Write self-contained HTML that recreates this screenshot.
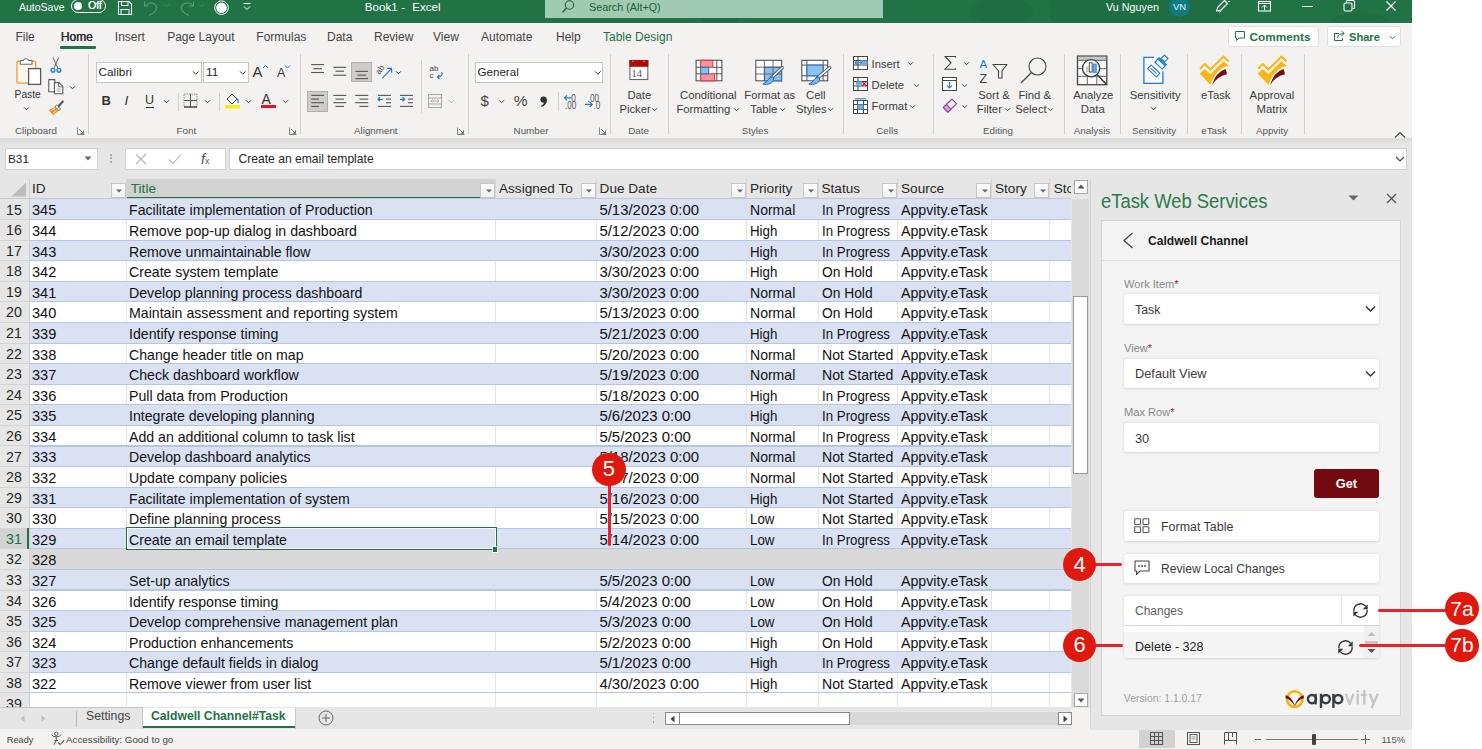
<!DOCTYPE html><html><head><meta charset="utf-8"><style>
html,body{margin:0;padding:0;}
body{width:1482px;height:749px;position:relative;overflow:hidden;background:#fff;font-family:"Liberation Sans",sans-serif;}
.t{position:absolute;white-space:nowrap;}
.r{position:absolute;box-sizing:border-box;}
</style></head><body>
<div class="r" style="left:0px;top:0px;width:1412px;height:749px;background:#f3f2f1;"></div>
<div class="r" style="left:0px;top:0px;width:1412px;height:22.6px;background:#217346;"></div>
<div class="r" style="left:0px;top:22.6px;width:1412px;height:1px;background:#fbfbfb;"></div>
<div class="r" style="left:0;top:0;width:1412px;height:22px;overflow:hidden;">
<div class="r" style="left:971px;top:-4px;width:62px;height:30px;border-radius:50%;background:rgba(0,0,0,0.05);"></div>
<div class="r" style="left:1049px;top:-6px;width:170px;height:34px;border-radius:18px 0 0 18px;background:rgba(0,0,0,0.05);"></div>
<div class="r" style="left:1330px;top:12px;width:60px;height:26px;border-radius:50%;background:rgba(0,0,0,0.05);"></div>
<div class="r" style="left:700px;top:2px;width:40px;height:26px;border-radius:50%;background:rgba(0,0,0,0.04);"></div>
</div>
<div class="t" style="left:19px;top:-3.50px;font-size:10.5px;line-height:20px;color:#fff;">AutoSave</div>
<div class="r" style="left:71px;top:-1px;width:35px;height:14px;border:1.2px solid #fff;border-radius:8px;"></div>
<div class="r" style="left:74.4px;top:2.3px;width:7.6px;height:7.6px;background:#fff;border-radius:50%;"></div>
<div class="t" style="left:88px;top:-3.70px;font-size:10.4px;line-height:20px;color:#fff;text-shadow:0.3px 0 0 #fff;">Off</div>
<svg class="r" style="left:117px;top:0px;" width="16" height="16" viewBox="0 0 16 16"><path d="M1.5 1.5 H12 L14.5 4 V14.5 H1.5 Z" fill="none" stroke="#fff" stroke-width="1.1"/><rect x="4.5" y="1.5" width="6.5" height="4" fill="none" stroke="#fff" stroke-width="1"/><rect x="4" y="9.5" width="8" height="5" fill="none" stroke="#fff" stroke-width="1"/></svg>
<svg class="r" style="left:143px;top:0px;" width="17" height="17" viewBox="0 0 17 17"><path d="M1.5 1.5 V6 H6" fill="none" stroke="#5a9a78" stroke-width="1.1"/><path d="M2 5.8 C4.5 2.5 9 2 12 4.5 C15 7 14.5 11.5 6 15.5" fill="none" stroke="#5a9a78" stroke-width="1.1"/></svg>
<svg class="r" style="left:163.0px;top:3.0px;" width="7.0" height="5.0" viewBox="0 0 7.0 5.0"><path d="M1 1.25 L3.5 3.75 L6.0 1.25" fill="none" stroke="#4f8f6c" stroke-width="1"/></svg>
<svg class="r" style="left:178px;top:0px;" width="17" height="17" viewBox="0 0 17 17"><path d="M15.5 1.5 V6 H11" fill="none" stroke="#5a9a78" stroke-width="1.1"/><path d="M15 5.8 C12.5 2.5 8 2 5 4.5 C2 7 2.5 11.5 11 15.5" fill="none" stroke="#5a9a78" stroke-width="1.1"/></svg>
<svg class="r" style="left:198.0px;top:3.0px;" width="7.0" height="5.0" viewBox="0 0 7.0 5.0"><path d="M1 1.25 L3.5 3.75 L6.0 1.25" fill="none" stroke="#4f8f6c" stroke-width="1"/></svg>
<svg class="r" style="left:213px;top:0px;" width="17" height="17" viewBox="0 0 17 17"><circle cx="8.5" cy="7.7" r="6.8" fill="none" stroke="#fff" stroke-width="1"/><circle cx="8.5" cy="7.7" r="5.3" fill="#fff"/></svg>
<svg class="r" style="left:242px;top:2px;" width="10" height="10" viewBox="0 0 10 10"><path d="M1.5 1.5 H8.5" stroke="#fff" stroke-width="1"/><path d="M2 4.5 L5 7.5 L8 4.5" fill="none" stroke="#fff" stroke-width="1"/></svg>
<div class="t" style="left:364.8px;top:-3.00px;font-size:11.6px;line-height:20px;color:#fff;">Book1</div>
<div class="t" style="left:401.3px;top:-3.00px;font-size:11.6px;line-height:20px;color:#fff;">-</div>
<div class="t" style="left:412.2px;top:-3.00px;font-size:11.6px;line-height:20px;color:#fff;">Excel</div>
<div class="r" style="left:544.5px;top:0px;width:338px;height:18px;background:#a0cbb2;"></div>
<svg class="r" style="left:561px;top:0px;" width="14" height="14" viewBox="0 0 14 14"><circle cx="8.5" cy="5" r="4.2" fill="none" stroke="#235c3b" stroke-width="1.1"/><path d="M5.5 8 L1.5 12.5" stroke="#235c3b" stroke-width="1.2"/></svg>
<div class="t" style="left:589px;top:-3.50px;font-size:10.8px;line-height:20px;color:#235c3b;">Search (Alt+Q)</div>
<div class="t" style="left:1106px;top:-3.00px;font-size:10.8px;line-height:20px;color:#fff;">Vu Nguyen</div>
<div class="r" style="left:1169px;top:-4px;width:21px;height:21px;border-radius:50%;background:#0f7b80;"></div>
<div class="t" style="left:979.5px;width:400px;text-align:center;top:-3.50px;font-size:9.5px;line-height:20px;color:#e8f4f4;">VN</div>
<svg class="r" style="left:1214px;top:-1px;" width="17" height="16" viewBox="0 0 17 16"><path d="M2.5 12 L4 8 L10.5 1.5 L13.5 4.5 L7 11 Z" fill="none" stroke="#fff" stroke-width="1.1" stroke-linejoin="round"/><path d="M4.5 12.5 C5.5 13.5 6.5 13 7 11.5" fill="none" stroke="#fff" stroke-width="1"/><path d="M13 0.5 L15.5 0 M14 2.5 L16 2.5" stroke="#fff" stroke-width="0.9"/></svg>
<svg class="r" style="left:1257px;top:-1px;" width="15" height="14" viewBox="0 0 15 14"><rect x="1.5" y="2.5" width="12" height="9.5" fill="none" stroke="#fff" stroke-width="1.1"/><path d="M1.5 4.5 H13.5" stroke="#fff" stroke-width="1"/><path d="M5 8.5 L7.5 6 L10 8.5 M7.5 6 V11" fill="none" stroke="#fff" stroke-width="1"/></svg>
<div class="r" style="left:1302px;top:5.6px;width:10.5px;height:1.1px;background:#fff;"></div>
<svg class="r" style="left:1343px;top:-1px;" width="13" height="14" viewBox="0 0 13 14"><rect x="1" y="4" width="8" height="8" fill="none" stroke="#fff" stroke-width="1.1" rx="1.5"/><path d="M3.5 3.5 V2.5 Q3.5 1.5 4.5 1.5 H10 Q11.5 1.5 11.5 3 V8.5 Q11.5 9.5 10.5 9.5 H9.5" fill="none" stroke="#fff" stroke-width="1.1"/></svg>
<svg class="r" style="left:1385px;top:0px;" width="12" height="12" viewBox="0 0 12 12"><path d="M1.5 1.5 L10.5 10.5 M10.5 1.5 L1.5 10.5" stroke="#fff" stroke-width="1.1"/></svg>
<div class="t" style="left:15.4px;top:26.50px;font-size:12px;line-height:20px;color:#444;">File</div>
<div class="t" style="left:60.7px;top:26.50px;font-size:12px;line-height:20px;color:#2b2b2b;text-shadow:0.35px 0 0 #2b2b2b;">Home</div>
<div class="t" style="left:114.8px;top:26.50px;font-size:12px;line-height:20px;color:#444;">Insert</div>
<div class="t" style="left:167.2px;top:26.50px;font-size:12px;line-height:20px;color:#444;">Page Layout</div>
<div class="t" style="left:256.3px;top:26.50px;font-size:12px;line-height:20px;color:#444;">Formulas</div>
<div class="t" style="left:327px;top:26.50px;font-size:12px;line-height:20px;color:#444;">Data</div>
<div class="t" style="left:374px;top:26.50px;font-size:12px;line-height:20px;color:#444;">Review</div>
<div class="t" style="left:433px;top:26.50px;font-size:12px;line-height:20px;color:#444;">View</div>
<div class="t" style="left:481px;top:26.50px;font-size:12px;line-height:20px;color:#444;">Automate</div>
<div class="t" style="left:556px;top:26.50px;font-size:12px;line-height:20px;color:#444;">Help</div>
<div class="t" style="left:603px;top:26.50px;font-size:12px;line-height:20px;color:#217346;">Table Design</div>
<div class="r" style="left:60px;top:46.3px;width:35.5px;height:2.6px;background:#217346;border-radius:1px;"></div>
<div class="r" style="left:1228px;top:25.8px;width:91px;height:21.5px;background:#fff;border:1px solid #e1dfdd;border-radius:3px;"></div>
<svg class="r" style="left:1234px;top:30px;" width="12" height="12" viewBox="0 0 12 12"><path d="M1.5 1.5 H10.5 V8 H5 L2.5 10.5 V8 H1.5 Z" fill="none" stroke="#217346" stroke-width="1"/></svg>
<div class="t" style="left:1249.6px;top:26.50px;font-size:11.8px;line-height:20px;color:#217346;font-weight:700;">Comments</div>
<div class="r" style="left:1327px;top:25.8px;width:74px;height:21.5px;background:#fff;border:1px solid #e1dfdd;border-radius:3px;"></div>
<svg class="r" style="left:1333px;top:30px;" width="13" height="12" viewBox="0 0 13 12"><path d="M6 3.5 H1.5 V10.5 H9.5 V8" fill="none" stroke="#217346" stroke-width="1"/><path d="M4.5 8 C5 5 7.5 3.5 11 3.5 M8.5 1 L11 3.5 L8.5 6" fill="none" stroke="#217346" stroke-width="1"/></svg>
<div class="t" style="left:1349px;top:26.50px;font-size:11.1px;line-height:20px;color:#217346;font-weight:700;">Share</div>
<svg class="r" style="left:1389.0px;top:34.5px;" width="7.0" height="5.0" viewBox="0 0 7.0 5.0"><path d="M1 1.25 L3.5 3.75 L6.0 1.25" fill="none" stroke="#217346" stroke-width="1"/></svg>
<div class="r" style="left:0px;top:137.6px;width:1412px;height:1px;background:#dcdcdc;"></div>
<div class="r" style="left:0;top:138.5px;width:1412px;height:4px;background:linear-gradient(#d8d8d8,#e6e6e6);"></div>
<div class="r" style="left:88px;top:54px;width:1px;height:80px;background:#d2d0ce;"></div>
<div class="r" style="left:300px;top:54px;width:1px;height:80px;background:#d2d0ce;"></div>
<div class="r" style="left:467.7px;top:54px;width:1px;height:80px;background:#d2d0ce;"></div>
<div class="r" style="left:610.3px;top:54px;width:1px;height:80px;background:#d2d0ce;"></div>
<div class="r" style="left:667.5px;top:54px;width:1px;height:80px;background:#d2d0ce;"></div>
<div class="r" style="left:843.4px;top:54px;width:1px;height:80px;background:#d2d0ce;"></div>
<div class="r" style="left:932.5px;top:54px;width:1px;height:80px;background:#d2d0ce;"></div>
<div class="r" style="left:1063.6px;top:54px;width:1px;height:80px;background:#d2d0ce;"></div>
<div class="r" style="left:1120.4px;top:54px;width:1px;height:80px;background:#d2d0ce;"></div>
<div class="r" style="left:1187.3px;top:54px;width:1px;height:80px;background:#d2d0ce;"></div>
<div class="r" style="left:1240.7px;top:54px;width:1px;height:80px;background:#d2d0ce;"></div>
<div class="r" style="left:1303.8px;top:54px;width:1px;height:80px;background:#d2d0ce;"></div>
<div class="t" style="left:-164px;width:400px;text-align:center;top:121.00px;font-size:9.8px;line-height:20px;color:#555;">Clipboard</div>
<div class="t" style="left:-13.599999999999994px;width:400px;text-align:center;top:121.00px;font-size:9.8px;line-height:20px;color:#555;">Font</div>
<div class="t" style="left:175.8px;width:400px;text-align:center;top:121.00px;font-size:9.8px;line-height:20px;color:#555;">Alignment</div>
<div class="t" style="left:331px;width:400px;text-align:center;top:121.00px;font-size:9.8px;line-height:20px;color:#555;">Number</div>
<div class="t" style="left:438.6px;width:400px;text-align:center;top:121.00px;font-size:9.8px;line-height:20px;color:#555;">Date</div>
<div class="t" style="left:555px;width:400px;text-align:center;top:121.00px;font-size:9.8px;line-height:20px;color:#555;">Styles</div>
<div class="t" style="left:687.2px;width:400px;text-align:center;top:121.00px;font-size:9.8px;line-height:20px;color:#555;">Cells</div>
<div class="t" style="left:798px;width:400px;text-align:center;top:121.00px;font-size:9.8px;line-height:20px;color:#555;">Editing</div>
<div class="t" style="left:892px;width:400px;text-align:center;top:121.00px;font-size:9.8px;line-height:20px;color:#555;">Analysis</div>
<div class="t" style="left:954px;width:400px;text-align:center;top:121.00px;font-size:9.8px;line-height:20px;color:#555;">Sensitivity</div>
<div class="t" style="left:1014px;width:400px;text-align:center;top:121.00px;font-size:9.8px;line-height:20px;color:#555;">eTask</div>
<div class="t" style="left:1072px;width:400px;text-align:center;top:121.00px;font-size:9.8px;line-height:20px;color:#555;">Appvity</div>
<svg class="r" style="left:77px;top:127px;" width="8" height="8" viewBox="0 0 8 8"><path d="M0.5 0.5 H7.5 V7.5" fill="none" stroke="#777" stroke-width="0.9" transform="rotate(180 4 4)"/><path d="M2 2 L6.5 6.5 M6.5 3.5 V6.5 H3.5" fill="none" stroke="#666" stroke-width="0.9"/></svg>
<svg class="r" style="left:289px;top:127px;" width="8" height="8" viewBox="0 0 8 8"><path d="M0.5 0.5 H7.5 V7.5" fill="none" stroke="#777" stroke-width="0.9" transform="rotate(180 4 4)"/><path d="M2 2 L6.5 6.5 M6.5 3.5 V6.5 H3.5" fill="none" stroke="#666" stroke-width="0.9"/></svg>
<svg class="r" style="left:456.5px;top:127px;" width="8" height="8" viewBox="0 0 8 8"><path d="M0.5 0.5 H7.5 V7.5" fill="none" stroke="#777" stroke-width="0.9" transform="rotate(180 4 4)"/><path d="M2 2 L6.5 6.5 M6.5 3.5 V6.5 H3.5" fill="none" stroke="#666" stroke-width="0.9"/></svg>
<svg class="r" style="left:599px;top:127px;" width="8" height="8" viewBox="0 0 8 8"><path d="M0.5 0.5 H7.5 V7.5" fill="none" stroke="#777" stroke-width="0.9" transform="rotate(180 4 4)"/><path d="M2 2 L6.5 6.5 M6.5 3.5 V6.5 H3.5" fill="none" stroke="#666" stroke-width="0.9"/></svg>
<svg class="r" style="left:8px;top:52px;" width="40" height="40" viewBox="0 0 40 40"><rect x="8.9" y="9.2" width="18.8" height="22" rx="1.2" fill="#fdf7ee" stroke="#ec9a33" stroke-width="1.3"/><path d="M12.3 12.2 V8.5 H15.5 A2.6 2.4 0 0 1 20.5 8.5 H24 V12.2 Z" fill="#fff" stroke="#6d6d6d" stroke-width="1.1" stroke-linejoin="round"/><rect x="20.6" y="16.6" width="12" height="15.8" fill="#fff" stroke="#5a5a5a" stroke-width="1.3"/></svg>
<div class="t" style="left:14.6px;top:84.70px;font-size:10.2px;line-height:20px;color:#333;">Paste</div>
<svg class="r" style="left:22.7px;top:105.9px;" width="7.0" height="5.0" viewBox="0 0 7.0 5.0"><path d="M1 1.25 L3.5 3.75 L6.0 1.25" fill="none" stroke="#444" stroke-width="1"/></svg>
<svg class="r" style="left:48px;top:55px;" width="14" height="18" viewBox="0 0 14 18"><path d="M5 2.5 L9.8 13 M10.8 2.5 L6 13" stroke="#555" stroke-width="0.9"/><circle cx="5" cy="15.2" r="1.9" fill="#cfe4f7" stroke="#1e7bd2" stroke-width="1.3"/><circle cx="10.9" cy="15.2" r="1.9" fill="#cfe4f7" stroke="#1e7bd2" stroke-width="1.3"/></svg>
<svg class="r" style="left:47px;top:78px;" width="18" height="18" viewBox="0 0 18 18"><path d="M1.8 1.6 H7.8 V13.8 H1.8 Z" fill="#fff" stroke="#5a5a5a" stroke-width="1.1" stroke-linejoin="round"/><path d="M7.4 4.6 H12 L15.8 8.4 V15.7 H7.4 Z" fill="#fff" stroke="#5a5a5a" stroke-width="1.1" stroke-linejoin="round"/><path d="M11.6 4.8 V8.8 H15.6" fill="none" stroke="#5a5a5a" stroke-width="0.9"/><path d="M9.6 11 H13.6 M9.6 13 H13.6" stroke="#8a8a8a" stroke-width="0.8"/></svg>
<svg class="r" style="left:69.2px;top:84.5px;" width="7.0" height="5.0" viewBox="0 0 7.0 5.0"><path d="M1 1.25 L3.5 3.75 L6.0 1.25" fill="none" stroke="#444" stroke-width="1"/></svg>
<svg class="r" style="left:47px;top:100px;" width="18" height="17" viewBox="0 0 18 17"><path d="M15.8 1.5 L11 6.8" stroke="#5a5a5a" stroke-width="2.2" stroke-linecap="round"/><path d="M9.6 5 L13.5 8.9 L11.8 10.6 L7.9 6.7 Z" fill="#fff" stroke="#5a5a5a" stroke-width="1"/><path d="M8.2 7 L11.6 10.4 L6.4 15 C4.5 13.5 3 12 1.9 10.1 Z" fill="#f08c1c"/><path d="M4.5 10.5 L8 8.5 M6 13 L9.2 10.8" stroke="#fff" stroke-width="0.9"/></svg>
<div class="r" style="left:95.5px;top:61.5px;width:106px;height:21px;background:#fff;border:1px solid #c8c6c4;"></div>
<div class="t" style="left:98.5px;top:62.00px;font-size:11.8px;line-height:20px;color:#262626;">Calibri</div>
<svg class="r" style="left:191.89999999999998px;top:69.7px;" width="7.6" height="5.6" viewBox="0 0 7.6 5.6"><path d="M1 1.4 L3.8 4.199999999999999 L6.6 1.4" fill="none" stroke="#333" stroke-width="1"/></svg>
<div class="r" style="left:203px;top:61.5px;width:45.5px;height:21px;background:#fff;border:1px solid #c8c6c4;"></div>
<div class="t" style="left:206px;top:62.00px;font-size:11.8px;line-height:20px;color:#262626;">11</div>
<svg class="r" style="left:238.5px;top:69.7px;" width="7.6" height="5.6" viewBox="0 0 7.6 5.6"><path d="M1 1.4 L3.8 4.199999999999999 L6.6 1.4" fill="none" stroke="#333" stroke-width="1"/></svg>
<div class="t" style="left:252.5px;top:61.50px;font-size:15px;line-height:20px;color:#333;">A</div>
<svg class="r" style="left:262px;top:64px;" width="7" height="5" viewBox="0 0 7 5"><path d="M1 4 L3.5 1.5 L6 4" fill="none" stroke="#1e7bd2" stroke-width="1"/></svg>
<div class="t" style="left:277px;top:62.50px;font-size:12.5px;line-height:20px;color:#333;">A</div>
<svg class="r" style="left:284px;top:64px;" width="7" height="5" viewBox="0 0 7 5"><path d="M1 1.5 L3.5 4 L6 1.5" fill="none" stroke="#1e7bd2" stroke-width="1"/></svg>
<div class="t" style="left:101.5px;top:90.50px;font-size:13px;line-height:20px;color:#333;font-weight:700;">B</div>
<div class="t" style="left:124.5px;top:90.50px;font-size:13.5px;line-height:20px;color:#333;font-style:italic;font-family:"Liberation Serif",serif;">I</div>
<div class="t" style="left:145px;top:89.50px;font-size:12.5px;line-height:20px;color:#333;">U</div>
<div class="r" style="left:145.5px;top:106.5px;width:8.5px;height:1px;background:#333;"></div>
<svg class="r" style="left:162.9px;top:98.5px;" width="7.0" height="5.0" viewBox="0 0 7.0 5.0"><path d="M1 1.25 L3.5 3.75 L6.0 1.25" fill="none" stroke="#444" stroke-width="1"/></svg>
<div class="r" style="left:177.5px;top:92.5px;width:1px;height:18px;background:#d2d0ce;"></div>
<svg class="r" style="left:183px;top:93px;" width="15" height="15" viewBox="0 0 15 15"><rect x="1" y="1" width="13" height="13" fill="none" stroke="#888" stroke-width="1" stroke-dasharray="1.5 1"/><path d="M7.5 1 V14 M1 7.5 H14" stroke="#555" stroke-width="1"/><path d="M1 14 H14" stroke="#333" stroke-width="1.2"/></svg>
<svg class="r" style="left:204.0px;top:98.5px;" width="7.0" height="5.0" viewBox="0 0 7.0 5.0"><path d="M1 1.25 L3.5 3.75 L6.0 1.25" fill="none" stroke="#444" stroke-width="1"/></svg>
<div class="r" style="left:218.6px;top:92.5px;width:1px;height:18px;background:#d2d0ce;"></div>
<svg class="r" style="left:224px;top:92px;" width="17" height="17" viewBox="0 0 17 17"><path d="M3 7 L8 2 L13 7 L8 12 Z" fill="none" stroke="#444" stroke-width="1"/><path d="M12 6 Q15 8 14 11" fill="none" stroke="#1e7bd2" stroke-width="1.2"/><rect x="1" y="13.2" width="15" height="3.3" fill="#ffea00"/></svg>
<svg class="r" style="left:245.1px;top:98.5px;" width="7.0" height="5.0" viewBox="0 0 7.0 5.0"><path d="M1 1.25 L3.5 3.75 L6.0 1.25" fill="none" stroke="#444" stroke-width="1"/></svg>
<div class="t" style="left:261.5px;top:88.50px;font-size:14px;line-height:20px;color:#333;">A</div>
<div class="r" style="left:261px;top:105px;width:15px;height:3.3px;background:#e81123;"></div>
<svg class="r" style="left:281.5px;top:98.5px;" width="7.0" height="5.0" viewBox="0 0 7.0 5.0"><path d="M1 1.25 L3.5 3.75 L6.0 1.25" fill="none" stroke="#444" stroke-width="1"/></svg>
<div class="r" style="left:351.4px;top:61.6px;width:20.2px;height:20.9px;background:#cfcdcb;border:1px solid #b3b0ad;"></div>
<div class="r" style="left:307.4px;top:91.1px;width:20.3px;height:21.1px;background:#cfcdcb;border:1px solid #b3b0ad;"></div>
<svg class="r" style="left:300px;top:56px;" width="160" height="60" viewBox="0 0 160 60"><rect x="11.20" y="8.05" width="12.90" height="1.1" fill="#555"/><rect x="13.50" y="12.15" width="8.50" height="1.1" fill="#555"/><rect x="11.20" y="15.95" width="12.90" height="1.1" fill="#555"/><rect x="33.30" y="10.75" width="13.00" height="1.1" fill="#555"/><rect x="35.50" y="14.65" width="8.50" height="1.1" fill="#555"/><rect x="33.30" y="18.65" width="13.00" height="1.1" fill="#555"/><rect x="55.50" y="14.85" width="12.50" height="1.1" fill="#555"/><rect x="57.50" y="18.65" width="8.50" height="1.1" fill="#555"/><rect x="55.50" y="22.05" width="12.50" height="1.1" fill="#555"/><rect x="11.20" y="38.85" width="12.80" height="1.1" fill="#555"/><rect x="11.20" y="42.55" width="7.80" height="1.1" fill="#555"/><rect x="11.20" y="46.15" width="12.80" height="1.1" fill="#555"/><rect x="11.20" y="49.85" width="7.80" height="1.1" fill="#555"/><rect x="33.30" y="38.85" width="13.00" height="1.1" fill="#555"/><rect x="35.50" y="42.55" width="8.50" height="1.1" fill="#555"/><rect x="33.30" y="46.15" width="13.00" height="1.1" fill="#555"/><rect x="35.50" y="49.85" width="8.50" height="1.1" fill="#555"/><rect x="55.20" y="38.85" width="13.00" height="1.1" fill="#555"/><rect x="59.50" y="42.55" width="8.70" height="1.1" fill="#555"/><rect x="55.20" y="46.15" width="13.00" height="1.1" fill="#555"/><rect x="59.50" y="49.85" width="8.70" height="1.1" fill="#555"/><rect x="78.00" y="38.85" width="13.00" height="1.1" fill="#555"/><rect x="86.00" y="42.55" width="5.00" height="1.1" fill="#555"/><rect x="86.00" y="46.15" width="5.00" height="1.1" fill="#555"/><rect x="78.00" y="49.85" width="13.00" height="1.1" fill="#555"/><rect x="100.00" y="38.85" width="13.00" height="1.1" fill="#555"/><rect x="108.00" y="42.55" width="5.00" height="1.1" fill="#555"/><rect x="108.00" y="46.15" width="5.00" height="1.1" fill="#555"/><rect x="100.00" y="49.85" width="13.00" height="1.1" fill="#555"/></svg>
<svg class="r" style="left:376px;top:62px;" width="18" height="18" viewBox="0 0 18 18"><text x="0" y="0" font-size="8.5" font-family="Liberation Sans" fill="#444" transform="translate(3.5 13) rotate(-55)">ab</text><path d="M6.4 16.1 L15.6 6.4 M11.2 6.4 H15.6 V10.8" fill="none" stroke="#1e7bd2" stroke-width="1.1"/></svg>
<svg class="r" style="left:376px;top:93px;" width="16" height="12" viewBox="0 0 16 12"><path d="M6.5 6.3 H2 M4 4.3 L2 6.3 L4 8.3" fill="none" stroke="#1e7bd2" stroke-width="1.3"/></svg>
<svg class="r" style="left:398px;top:93px;" width="16" height="12" viewBox="0 0 16 12"><path d="M2 6.3 H6.5 M4.5 4.3 L6.5 6.3 L4.5 8.3" fill="none" stroke="#1e7bd2" stroke-width="1.3"/></svg>
<svg class="r" style="left:395.3px;top:69.5px;" width="7.0" height="5.0" viewBox="0 0 7.0 5.0"><path d="M1 1.25 L3.5 3.75 L6.0 1.25" fill="none" stroke="#444" stroke-width="1"/></svg>
<div class="r" style="left:421px;top:59.6px;width:1px;height:53px;background:#d2d0ce;"></div>
<svg class="r" style="left:428px;top:64px;" width="17" height="16" viewBox="0 0 17 16"><text x="1.5" y="7.2" font-size="8" font-family="Liberation Sans" fill="#444">ab</text><text x="1.5" y="14.2" font-size="8" font-family="Liberation Sans" fill="#444">c</text><path d="M13.5 8 C15 10 14 13 10 13 M11.5 10.8 L9.5 13 L11.5 15.2" fill="none" stroke="#1e7bd2" stroke-width="1.2"/></svg>
<svg class="r" style="left:428px;top:94px;" width="15" height="14" viewBox="0 0 15 14"><rect x="0.5" y="0.5" width="13" height="13" fill="none" stroke="#a8a8a8" stroke-width="1"/><path d="M0.5 4 H13.5 M0.5 10 H13.5" stroke="#a8a8a8" stroke-width="1"/><path d="M3 7 H11 M4.5 5.5 L3 7 L4.5 8.5 M9.5 5.5 L11 7 L9.5 8.5" fill="none" stroke="#a8a8a8" stroke-width="0.9"/></svg>
<svg class="r" style="left:448.1px;top:98.5px;" width="7.0" height="5.0" viewBox="0 0 7.0 5.0"><path d="M1 1.25 L3.5 3.75 L6.0 1.25" fill="none" stroke="#b0b0b0" stroke-width="1"/></svg>
<div class="r" style="left:475px;top:61.5px;width:128px;height:21px;background:#fff;border:1px solid #c8c6c4;"></div>
<div class="t" style="left:477.5px;top:62.00px;font-size:11.6px;line-height:20px;color:#262626;">General</div>
<svg class="r" style="left:593.5px;top:69.7px;" width="7.6" height="5.6" viewBox="0 0 7.6 5.6"><path d="M1 1.4 L3.8 4.199999999999999 L6.6 1.4" fill="none" stroke="#333" stroke-width="1"/></svg>
<div class="t" style="left:480.5px;top:91.30px;font-size:15px;line-height:20px;color:#444;">$</div>
<svg class="r" style="left:497.9px;top:98.5px;" width="7.0" height="5.0" viewBox="0 0 7.0 5.0"><path d="M1 1.25 L3.5 3.75 L6.0 1.25" fill="none" stroke="#444" stroke-width="1"/></svg>
<div class="t" style="left:513.8px;top:91.30px;font-size:15.5px;line-height:20px;color:#444;">%</div>
<svg class="r" style="left:538px;top:94px;" width="12" height="15" viewBox="0 0 12 15"><circle cx="5.6" cy="5.6" r="3.2" fill="#333"/><path d="M8.6 5 C9.3 9.5 6.8 12 3.2 13 L2.9 12 C5.3 10.8 6.3 9 6.2 7.2 Z" fill="#333"/></svg>
<div class="r" style="left:557.6px;top:92.4px;width:1px;height:18.4px;background:#d2d0ce;"></div>
<svg class="r" style="left:562px;top:92px;" width="18" height="18" viewBox="0 0 18 18"><g transform="scale(0.82 1)" font-family="Liberation Sans" font-size="10" fill="#555"><text x="11.4" y="10.5">0</text><text x="3.6" y="17.5">.00</text></g><path d="M9.5 5.8 H2.5 M5 3.3 L2.5 5.8 L5 8.3" fill="none" stroke="#1e7bd2" stroke-width="1.2"/></svg>
<svg class="r" style="left:584px;top:92px;" width="18" height="18" viewBox="0 0 18 18"><g transform="scale(0.82 1)" font-family="Liberation Sans" font-size="10" fill="#555"><text x="4.5" y="10.5">.00</text><text x="11.5" y="17.5">.0</text></g><path d="M1 12.4 H8.2 M5.7 9.9 L8.2 12.4 L5.7 14.9" fill="none" stroke="#1e7bd2" stroke-width="1.2"/></svg>
<svg class="r" style="left:620px;top:54px;" width="40" height="32" viewBox="0 0 40 32"><rect x="9.9" y="6.5" width="17.9" height="19" fill="#fff" stroke="#6a6a6a" stroke-width="1.1"/><rect x="9.4" y="6" width="18.9" height="6.8" fill="#b00b0b"/><path d="M12 7.3 H14 M23 7.3 H25" stroke="#e8b0b0" stroke-width="0.7"/><text x="11.6" y="23.2" font-size="10.5" font-family="Liberation Serif" fill="#555">14</text></svg>
<div class="t" style="left:627.4px;top:84.50px;font-size:11.3px;line-height:20px;color:#3d3d3d;">Date</div>
<div class="t" style="left:619.4px;top:99.00px;font-size:11.3px;line-height:20px;color:#3d3d3d;">Picker</div>
<svg class="r" style="left:651.0px;top:106.5px;" width="7.0" height="5.0" viewBox="0 0 7.0 5.0"><path d="M1 1.25 L3.5 3.75 L6.0 1.25" fill="none" stroke="#444" stroke-width="1"/></svg>
<svg class="r" style="left:695px;top:59px;" width="30" height="24" viewBox="0 0 30 24"><rect x="1.1" y="1.3" width="25.8" height="20.5" fill="#fff" stroke="#555" stroke-width="1.1"/><rect x="5.6" y="1.3" width="12.2" height="7" fill="#f5929b" stroke="#e0343e" stroke-width="1"/><rect x="5.6" y="14.8" width="14" height="7" fill="#f5929b" stroke="#e0343e" stroke-width="1"/><rect x="5.6" y="8.3" width="8.1" height="6.5" fill="#8cc0ee" stroke="#1f6fc0" stroke-width="1"/><path d="M1.1 8.3 H5.6 M17.8 8.3 H26.9 M1.1 14.8 H5.6 M19.6 14.8 H26.9 M21.8 1.3 V21.8" stroke="#555" stroke-width="1"/></svg>
<div class="t" style="left:680.1px;top:84.50px;font-size:11.3px;line-height:20px;color:#3d3d3d;">Conditional</div>
<div class="t" style="left:676.4px;top:99.00px;font-size:11.3px;line-height:20px;color:#3d3d3d;">Formatting</div>
<svg class="r" style="left:733.0px;top:106.5px;" width="7.0" height="5.0" viewBox="0 0 7.0 5.0"><path d="M1 1.25 L3.5 3.75 L6.0 1.25" fill="none" stroke="#444" stroke-width="1"/></svg>
<svg class="r" style="left:754px;top:59px;" width="32" height="28" viewBox="0 0 32 28"><rect x="1.8" y="1.3" width="25.8" height="20.5" fill="#fff" stroke="#555" stroke-width="1.1"/><rect x="10.4" y="8.2" width="17.2" height="13.6" fill="#8cc0ee" stroke="#1f6fc0" stroke-width="1"/><path d="M1.8 8.2 H27.6 M1.8 15 H27.6 M10.4 1.3 V21.8 M19 1.3 V21.8" stroke="#555" stroke-width="1" opacity="0.85"/><path d="M28.1 8.7 L17 19.3" stroke="#555" stroke-width="3.4" stroke-linecap="round"/><path d="M28.1 8.7 L17 19.3" stroke="#fff" stroke-width="1.5" stroke-linecap="round"/><path d="M19 17.8 C14 18.3 14 23.3 8.8 25.1 C13.8 26.1 19.5 24.3 19.5 20.1 Z" fill="#7db6ea" stroke="#1f6fc0" stroke-width="1"/></svg>
<div class="t" style="left:744.3px;top:84.50px;font-size:11.3px;line-height:20px;color:#3d3d3d;">Format as</div>
<div class="t" style="left:750.3px;top:99.00px;font-size:11.3px;line-height:20px;color:#3d3d3d;">Table</div>
<svg class="r" style="left:778.6px;top:106.5px;" width="7.0" height="5.0" viewBox="0 0 7.0 5.0"><path d="M1 1.25 L3.5 3.75 L6.0 1.25" fill="none" stroke="#444" stroke-width="1"/></svg>
<svg class="r" style="left:801px;top:59px;" width="32" height="28" viewBox="0 0 32 28"><rect x="0.8" y="1.3" width="25.9" height="20.5" fill="#fff" stroke="#555" stroke-width="1.1"/><path d="M0.8 6.1 H26.7 M0.8 16.8 H26.7 M5.9 1.3 V21.8 M22.1 1.3 V21.8" stroke="#555" stroke-width="1"/><rect x="5.9" y="6.1" width="16.2" height="10.7" fill="#8cc0ee" stroke="#1f6fc0" stroke-width="1"/><path d="M28.7 8.7 L16 19.3" stroke="#555" stroke-width="3.4" stroke-linecap="round"/><path d="M28.7 8.7 L16 19.3" stroke="#fff" stroke-width="1.5" stroke-linecap="round"/><path d="M18 17.8 C13 18.3 13 23.3 7.8 25.1 C12.8 26.1 18.5 24.3 18.5 20.1 Z" fill="#7db6ea" stroke="#1f6fc0" stroke-width="1"/></svg>
<div class="t" style="left:806px;top:84.50px;font-size:11.3px;line-height:20px;color:#3d3d3d;">Cell</div>
<div class="t" style="left:796px;top:99.00px;font-size:11.3px;line-height:20px;color:#3d3d3d;">Styles</div>
<svg class="r" style="left:826.5px;top:106.5px;" width="7.0" height="5.0" viewBox="0 0 7.0 5.0"><path d="M1 1.25 L3.5 3.75 L6.0 1.25" fill="none" stroke="#444" stroke-width="1"/></svg>
<svg class="r" style="left:853px;top:56px;" width="16" height="15" viewBox="0 0 16 15"><rect x="0.5" y="0.5" width="14" height="13" fill="#fff" stroke="#444" stroke-width="1"/><path d="M0.5 4.5 H14.5 M0.5 9 H14.5 M5 0.5 V13.5" stroke="#444" stroke-width="1"/><rect x="7" y="4.5" width="7.5" height="4.5" fill="#6aaeea"/><path d="M9 6.7 H2 M4 4.7 L2 6.7 L4 8.7" fill="none" stroke="#1e7bd2" stroke-width="1.1"/></svg>
<div class="t" style="left:871.5px;top:54.00px;font-size:11.3px;line-height:20px;color:#3d3d3d;">Insert</div>
<svg class="r" style="left:907.1px;top:61.0px;" width="7.0" height="5.0" viewBox="0 0 7.0 5.0"><path d="M1 1.25 L3.5 3.75 L6.0 1.25" fill="none" stroke="#444" stroke-width="1"/></svg>
<svg class="r" style="left:853px;top:77px;" width="16" height="15" viewBox="0 0 16 15"><rect x="0.5" y="0.5" width="14" height="13" fill="#fff" stroke="#444" stroke-width="1"/><path d="M0.5 4.5 H14.5 M0.5 9 H14.5 M5 0.5 V13.5" stroke="#444" stroke-width="1"/><rect x="3" y="4.5" width="6" height="4.5" fill="#6aaeea"/><path d="M9 4.5 L13.5 9 M13.5 4.5 L9 9" stroke="#e81123" stroke-width="1.1"/></svg>
<div class="t" style="left:871.5px;top:75.00px;font-size:11.3px;line-height:20px;color:#3d3d3d;">Delete</div>
<svg class="r" style="left:913.3px;top:82.5px;" width="7.0" height="5.0" viewBox="0 0 7.0 5.0"><path d="M1 1.25 L3.5 3.75 L6.0 1.25" fill="none" stroke="#444" stroke-width="1"/></svg>
<svg class="r" style="left:853px;top:98px;" width="16" height="16" viewBox="0 0 16 16"><rect x="0.5" y="2.5" width="14" height="13" fill="#fff" stroke="#444" stroke-width="1"/><path d="M0.5 6.5 H14.5 M0.5 11.5 H14.5 M4.5 2.5 V15.5 M10.5 2.5 V15.5" stroke="#444" stroke-width="1"/><rect x="4.5" y="6.5" width="6" height="5" fill="#6aaeea"/><path d="M2 0.8 H13" stroke="#1e7bd2" stroke-width="1"/></svg>
<div class="t" style="left:871.5px;top:96.30px;font-size:11.3px;line-height:20px;color:#3d3d3d;">Format</div>
<svg class="r" style="left:908.9px;top:103.8px;" width="7.0" height="5.0" viewBox="0 0 7.0 5.0"><path d="M1 1.25 L3.5 3.75 L6.0 1.25" fill="none" stroke="#444" stroke-width="1"/></svg>
<svg class="r" style="left:943px;top:55px;" width="15" height="16" viewBox="0 0 15 16"><path d="M12.5 2.5 V1.5 H2 L8 7.8 L2 14.2 H12.5 V13.2" fill="none" stroke="#444" stroke-width="1.1" stroke-linejoin="miter"/></svg>
<svg class="r" style="left:962.8px;top:61.0px;" width="7.0" height="5.0" viewBox="0 0 7.0 5.0"><path d="M1 1.25 L3.5 3.75 L6.0 1.25" fill="none" stroke="#444" stroke-width="1"/></svg>
<svg class="r" style="left:942px;top:77px;" width="16" height="15" viewBox="0 0 16 15"><rect x="0.5" y="0.5" width="14" height="13" fill="#fff" stroke="#444" stroke-width="1"/><path d="M0.5 3.5 H14.5" stroke="#444" stroke-width="1"/><path d="M7.5 5 V11 M5 8.5 L7.5 11 L10 8.5" fill="none" stroke="#1e7bd2" stroke-width="1.1"/></svg>
<svg class="r" style="left:961.0px;top:82.5px;" width="7.0" height="5.0" viewBox="0 0 7.0 5.0"><path d="M1 1.25 L3.5 3.75 L6.0 1.25" fill="none" stroke="#444" stroke-width="1"/></svg>
<svg class="r" style="left:938px;top:94px;" width="24" height="24" viewBox="0 0 24 24"><path d="M8.7 10.7 L12.8 15.1 L9.9 18.3 L5.3 13.5 Z" fill="#dfa3e8"/><path d="M13.9 5.1 L18.6 9.6 L9.9 18.3 L5.3 13.5 Z" fill="none" stroke="#9b3fb5" stroke-width="1.3" stroke-linejoin="round"/><path d="M8.7 10.7 L12.8 15.1" stroke="#9b3fb5" stroke-width="1.2"/></svg>
<svg class="r" style="left:961.0px;top:103.8px;" width="7.0" height="5.0" viewBox="0 0 7.0 5.0"><path d="M1 1.25 L3.5 3.75 L6.0 1.25" fill="none" stroke="#444" stroke-width="1"/></svg>
<svg class="r" style="left:979px;top:56px;" width="30" height="28" viewBox="0 0 30 28"><text x="0.5" y="12" font-size="11.5" font-family="Liberation Sans" fill="#1e7bd2">A</text><text x="0.5" y="26.5" font-size="12.5" font-family="Liberation Sans" fill="#444">Z</text><path d="M14 8.5 H28 L23 15 V22 L19.5 22 V15 Z" fill="none" stroke="#444" stroke-width="1.1" stroke-linejoin="round"/></svg>
<div class="t" style="left:978.3px;top:84.50px;font-size:11.3px;line-height:20px;color:#3d3d3d;">Sort &amp;</div>
<div class="t" style="left:976.8px;top:99.00px;font-size:11.3px;line-height:20px;color:#3d3d3d;">Filter</div>
<svg class="r" style="left:1003.8px;top:106.5px;" width="7.0" height="5.0" viewBox="0 0 7.0 5.0"><path d="M1 1.25 L3.5 3.75 L6.0 1.25" fill="none" stroke="#444" stroke-width="1"/></svg>
<svg class="r" style="left:1019px;top:56px;" width="30" height="30" viewBox="0 0 30 30"><circle cx="18.5" cy="10.5" r="8.5" fill="none" stroke="#444" stroke-width="1.1"/><path d="M12.5 16.5 L2 27" stroke="#444" stroke-width="1.2"/></svg>
<div class="t" style="left:1018.4px;top:84.50px;font-size:11.3px;line-height:20px;color:#3d3d3d;">Find &amp;</div>
<div class="t" style="left:1015.3px;top:99.00px;font-size:11.3px;line-height:20px;color:#3d3d3d;">Select</div>
<svg class="r" style="left:1046.8px;top:106.5px;" width="7.0" height="5.0" viewBox="0 0 7.0 5.0"><path d="M1 1.25 L3.5 3.75 L6.0 1.25" fill="none" stroke="#444" stroke-width="1"/></svg>
<svg class="r" style="left:1070px;top:50px;" width="40" height="40" viewBox="0 0 40 40"><rect x="7.5" y="6.1" width="29.3" height="28.6" fill="#fafafa" stroke="#444" stroke-width="1.3"/><rect x="8.2" y="6.8" width="27.9" height="3.5" fill="#c8c8c8"/><path d="M7.5 10.3 H36.8 M7.5 18.7 H36.8 M7.5 26.3 H36.8 M17.3 26.3 V34.7 M26.8 26.3 V34.7" stroke="#666" stroke-width="1"/><circle cx="21.1" cy="18.2" r="8.6" fill="#fafafa" stroke="#3a3a3a" stroke-width="1.3"/><rect x="16" y="16.5" width="2.5" height="5.5" fill="#c8c8c8"/><rect x="19.3" y="12.7" width="2.8" height="9.3" fill="#fff" stroke="#444" stroke-width="0.9"/><rect x="23" y="14" width="3.2" height="8.3" fill="#6aaeea" stroke="#1e7bd2" stroke-width="0.8"/><path d="M27.3 24.8 L36.5 34.4" stroke="#3a3a3a" stroke-width="1.5"/></svg>
<div class="t" style="left:1073.2px;top:84.50px;font-size:11.3px;line-height:20px;color:#3d3d3d;">Analyze</div>
<div class="t" style="left:1080.8px;top:99.00px;font-size:11.3px;line-height:20px;color:#3d3d3d;">Data</div>
<svg class="r" style="left:1136px;top:52px;" width="40" height="36" viewBox="0 0 40 36"><path d="M18.2 5.3 H7.9 V31.3 H26.9 V19.3" fill="#fafafa" stroke="#1e7bd2" stroke-width="1.3"/><g transform="translate(17.7 19) rotate(43)"><rect x="-6" y="-2.5" width="12" height="5" fill="#fff" stroke="#1e7bd2" stroke-width="1.1"/><path d="M-4 0 H4" stroke="#1e7bd2" stroke-width="1"/></g><g transform="translate(24.6 11.4) rotate(43)"><rect x="-5" y="-3" width="10" height="6" fill="#fff" stroke="#1e7bd2" stroke-width="1.2"/><path d="M-5 -1.6 H5" stroke="#1e7bd2" stroke-width="1.6"/></g><g transform="translate(28.6 6.4) rotate(43)"><rect x="-2.4" y="-2.3" width="4.8" height="4.6" fill="#fff" stroke="#1e7bd2" stroke-width="1.1"/></g></svg>
<div class="t" style="left:1129.8px;top:84.50px;font-size:11.3px;line-height:20px;color:#3d3d3d;">Sensitivity</div>
<svg class="r" style="left:1149.5px;top:105.8px;" width="7.0" height="5.0" viewBox="0 0 7.0 5.0"><path d="M1 1.25 L3.5 3.75 L6.0 1.25" fill="none" stroke="#444" stroke-width="1"/></svg>
<svg class="r" style="left:1192px;top:50px;" width="44" height="40" viewBox="0 0 44 40"><path d="M8 18.7 L12.8 14.1 L18.4 19.6 L31.5 6.6 L36.6 11.2" fill="none" stroke="#f8b514" stroke-width="2.1" stroke-linejoin="miter"/><path d="M7.7 23.5 L12.8 19 L18.4 24.2 L31.5 11.2 L36.8 16 Q25 17 18.4 34.7 Z" fill="#f8b514"/><path d="M20 35 Q24 22 33.6 19 L35 24.3 Q26 26 20 35 Z" fill="#760d12"/></svg>
<div class="t" style="left:1201px;top:84.50px;font-size:11.3px;line-height:20px;color:#3d3d3d;">eTask</div>
<svg class="r" style="left:1249.5px;top:50px;" width="44" height="40" viewBox="0 0 44 40"><path d="M8 18.7 L12.8 14.1 L18.4 19.6 L31.5 6.6 L36.6 11.2" fill="none" stroke="#f8b514" stroke-width="2.1" stroke-linejoin="miter"/><path d="M7.7 23.5 L12.8 19 L18.4 24.2 L31.5 11.2 L36.8 16 Q25 17 18.4 34.7 Z" fill="#f8b514"/><path d="M20 35 Q24 22 33.6 19 L35 24.3 Q26 26 20 35 Z" fill="#760d12"/></svg>
<div class="t" style="left:1249.6px;top:84.50px;font-size:11.3px;line-height:20px;color:#3d3d3d;">Approval</div>
<div class="t" style="left:1256.6px;top:99.00px;font-size:11.3px;line-height:20px;color:#3d3d3d;">Matrix</div>
<svg class="r" style="left:1394px;top:131px;" width="12" height="8" viewBox="0 0 12 8"><path d="M1 6.5 L6 1.5 L11 6.5" fill="none" stroke="#444" stroke-width="1.1"/></svg>
<div class="r" style="left:0px;top:142.5px;width:1412px;height:57px;background:#e6e6e6;"></div>
<div class="r" style="left:4.5px;top:148px;width:93px;height:22px;background:#fff;border:1px solid #d1d1d1;"></div>
<div class="t" style="left:8px;top:149.00px;font-size:11.8px;line-height:20px;color:#262626;">B31</div>
<svg class="r" style="left:84px;top:156px;" width="8" height="5" viewBox="0 0 8 5"><path d="M0.5 0.5 H7.5 L4 4.5 Z" fill="#666"/></svg>
<div class="r" style="left:110.3px;top:153.7px;width:2px;height:2px;background:#9a9a9a;border-radius:50%;"></div>
<div class="r" style="left:110.3px;top:157.4px;width:2px;height:2px;background:#9a9a9a;border-radius:50%;"></div>
<div class="r" style="left:110.3px;top:161.1px;width:2px;height:2px;background:#9a9a9a;border-radius:50%;"></div>
<div class="r" style="left:125px;top:148px;width:100.5px;height:22px;background:#fff;border:1px solid #d1d1d1;"></div>
<svg class="r" style="left:135px;top:153px;" width="12" height="12" viewBox="0 0 12 12"><path d="M1 1 L11 11 M11 1 L1 11" stroke="#b5b5b5" stroke-width="1.1"/></svg>
<svg class="r" style="left:168px;top:153px;" width="14" height="12" viewBox="0 0 14 12"><path d="M1 6.5 L5 10.5 L13 1.5" fill="none" stroke="#b5b5b5" stroke-width="1.1"/></svg>
<div class="t" style="left:201px;top:148.50px;font-size:14px;line-height:20px;color:#555;font-family:"Liberation Serif",serif;"><i>f</i><span style="font-size:9px">x</span></div>
<div class="r" style="left:228.7px;top:148px;width:1178.5px;height:22px;background:#fff;border:1px solid #d1d1d1;"></div>
<div class="t" style="left:238.5px;top:149.00px;font-size:12.1px;line-height:20px;color:#262626;">Create an email template</div>
<svg class="r" style="left:1394.5px;top:155.5px;" width="10" height="6" viewBox="0 0 10 6"><path d="M1 1 L5 5 L9 1" fill="none" stroke="#444" stroke-width="1.2"/></svg>
<div class="r" style="left:0px;top:179px;width:1071px;height:20.0px;background:#e6e6e6;"></div>
<div class="r" style="left:126.2px;top:178.8px;width:369.4px;height:19.9px;background:#d2d2d2;"></div>
<div class="r" style="left:126.2px;top:197.2px;width:369.4px;height:1.6px;background:#217346;"></div>
<svg class="r" style="left:11px;top:182px;" width="16" height="15" viewBox="0 0 16 15"><path d="M15 0.5 V14.5 H0.5 Z" fill="#bdbdbd"/></svg>
<div class="r" style="left:28.6px;top:178.8px;width:1px;height:20px;background:#d0d0d0;"></div>
<div class="t" style="left:32px;top:178.50px;font-size:13.6px;line-height:20px;color:#262626;">ID</div>
<div class="t" style="left:130.8px;top:178.50px;font-size:13.6px;line-height:20px;color:#217346;">Title</div>
<div class="t" style="left:499px;top:178.50px;font-size:13.6px;line-height:20px;color:#262626;">Assigned To</div>
<div class="t" style="left:599.6px;top:178.50px;font-size:13.6px;line-height:20px;color:#262626;">Due Date</div>
<div class="t" style="left:750px;top:178.50px;font-size:13.6px;line-height:20px;color:#262626;">Priority</div>
<div class="t" style="left:821.5px;top:178.50px;font-size:13.6px;line-height:20px;color:#262626;">Status</div>
<div class="t" style="left:901px;top:178.50px;font-size:13.6px;line-height:20px;color:#262626;">Source</div>
<div class="t" style="left:995px;top:178.50px;font-size:13.6px;line-height:20px;color:#262626;">Story</div>
<div class="t" style="left:1053.7px;top:178.50px;font-size:13.6px;line-height:20px;color:#262626;">Sto</div>
<div class="r" style="left:125.7px;top:179px;width:1px;height:19.5px;background:#d6d6d6;"></div>
<div class="r" style="left:495.1px;top:179px;width:1px;height:19.5px;background:#d6d6d6;"></div>
<div class="r" style="left:595.6px;top:179px;width:1px;height:19.5px;background:#d6d6d6;"></div>
<div class="r" style="left:746.0px;top:179px;width:1px;height:19.5px;background:#d6d6d6;"></div>
<div class="r" style="left:817.5px;top:179px;width:1px;height:19.5px;background:#d6d6d6;"></div>
<div class="r" style="left:897.1px;top:179px;width:1px;height:19.5px;background:#d6d6d6;"></div>
<div class="r" style="left:991.0px;top:179px;width:1px;height:19.5px;background:#d6d6d6;"></div>
<div class="r" style="left:1049.0px;top:179px;width:1px;height:19.5px;background:#d6d6d6;"></div>
<div class="r" style="left:111.0px;top:183.2px;width:15px;height:15px;background:linear-gradient(#fdfdfd,#f0f0f0);border:1px solid #c6c6c6;"></div>
<svg class="r" style="left:115.2px;top:188.5px;" width="8" height="5" viewBox="0 0 8 5"><path d="M1 0.5 H7 L4 3.5 Z" fill="#666"/></svg>
<div class="r" style="left:480.4px;top:183.2px;width:15px;height:15px;background:linear-gradient(#fdfdfd,#f0f0f0);border:1px solid #c6c6c6;"></div>
<svg class="r" style="left:484.6px;top:188.5px;" width="8" height="5" viewBox="0 0 8 5"><path d="M1 0.5 H7 L4 3.5 Z" fill="#666"/></svg>
<div class="r" style="left:580.9px;top:183.2px;width:15px;height:15px;background:linear-gradient(#fdfdfd,#f0f0f0);border:1px solid #c6c6c6;"></div>
<svg class="r" style="left:585.1px;top:188.5px;" width="8" height="5" viewBox="0 0 8 5"><path d="M1 0.5 H7 L4 3.5 Z" fill="#666"/></svg>
<div class="r" style="left:731.3px;top:183.2px;width:15px;height:15px;background:linear-gradient(#fdfdfd,#f0f0f0);border:1px solid #c6c6c6;"></div>
<svg class="r" style="left:735.5px;top:188.5px;" width="8" height="5" viewBox="0 0 8 5"><path d="M1 0.5 H7 L4 3.5 Z" fill="#666"/></svg>
<div class="r" style="left:802.8px;top:183.2px;width:15px;height:15px;background:linear-gradient(#fdfdfd,#f0f0f0);border:1px solid #c6c6c6;"></div>
<svg class="r" style="left:807px;top:188.5px;" width="8" height="5" viewBox="0 0 8 5"><path d="M1 0.5 H7 L4 3.5 Z" fill="#666"/></svg>
<div class="r" style="left:882.4px;top:183.2px;width:15px;height:15px;background:linear-gradient(#fdfdfd,#f0f0f0);border:1px solid #c6c6c6;"></div>
<svg class="r" style="left:886.6px;top:188.5px;" width="8" height="5" viewBox="0 0 8 5"><path d="M1 0.5 H7 L4 3.5 Z" fill="#666"/></svg>
<div class="r" style="left:976.3px;top:183.2px;width:15px;height:15px;background:linear-gradient(#fdfdfd,#f0f0f0);border:1px solid #c6c6c6;"></div>
<svg class="r" style="left:980.5px;top:188.5px;" width="8" height="5" viewBox="0 0 8 5"><path d="M1 0.5 H7 L4 3.5 Z" fill="#666"/></svg>
<div class="r" style="left:1034.3px;top:183.2px;width:15px;height:15px;background:linear-gradient(#fdfdfd,#f0f0f0);border:1px solid #c6c6c6;"></div>
<svg class="r" style="left:1038.5px;top:188.5px;" width="8" height="5" viewBox="0 0 8 5"><path d="M1 0.5 H7 L4 3.5 Z" fill="#666"/></svg>
<div class="r" style="left:0px;top:198.3px;width:1071px;height:0.8px;background:#c8c8c8;"></div>
<div class="r" style="left:0px;top:199.0px;width:1071px;height:508.29999999999995px;background:#fff;"></div>
<div class="r" style="left:0px;top:199.0px;width:28.6px;height:508.29999999999995px;background:#e6e6e6;"></div>
<div class="r" style="left:28.6px;top:199.0px;width:1px;height:508.29999999999995px;background:#d0d0d0;"></div>
<div class="r" style="left:29.6px;top:199.0px;width:1041.4px;height:20.58px;background:#d9e1f2;"></div>
<div class="r" style="left:125.7px;top:219.57999999999998px;width:1px;height:20.579999999999984px;background:#e4e4e4;"></div>
<div class="r" style="left:495.1px;top:219.57999999999998px;width:1px;height:20.579999999999984px;background:#e4e4e4;"></div>
<div class="r" style="left:595.6px;top:219.57999999999998px;width:1px;height:20.579999999999984px;background:#e4e4e4;"></div>
<div class="r" style="left:746.0px;top:219.57999999999998px;width:1px;height:20.579999999999984px;background:#e4e4e4;"></div>
<div class="r" style="left:817.5px;top:219.57999999999998px;width:1px;height:20.579999999999984px;background:#e4e4e4;"></div>
<div class="r" style="left:897.1px;top:219.57999999999998px;width:1px;height:20.579999999999984px;background:#e4e4e4;"></div>
<div class="r" style="left:991.0px;top:219.57999999999998px;width:1px;height:20.579999999999984px;background:#e4e4e4;"></div>
<div class="r" style="left:1049.0px;top:219.57999999999998px;width:1px;height:20.579999999999984px;background:#e4e4e4;"></div>
<div class="r" style="left:29.6px;top:240.16px;width:1041.4px;height:20.58px;background:#d9e1f2;"></div>
<div class="r" style="left:125.7px;top:260.74px;width:1px;height:20.579999999999984px;background:#e4e4e4;"></div>
<div class="r" style="left:495.1px;top:260.74px;width:1px;height:20.579999999999984px;background:#e4e4e4;"></div>
<div class="r" style="left:595.6px;top:260.74px;width:1px;height:20.579999999999984px;background:#e4e4e4;"></div>
<div class="r" style="left:746.0px;top:260.74px;width:1px;height:20.579999999999984px;background:#e4e4e4;"></div>
<div class="r" style="left:817.5px;top:260.74px;width:1px;height:20.579999999999984px;background:#e4e4e4;"></div>
<div class="r" style="left:897.1px;top:260.74px;width:1px;height:20.579999999999984px;background:#e4e4e4;"></div>
<div class="r" style="left:991.0px;top:260.74px;width:1px;height:20.579999999999984px;background:#e4e4e4;"></div>
<div class="r" style="left:1049.0px;top:260.74px;width:1px;height:20.579999999999984px;background:#e4e4e4;"></div>
<div class="r" style="left:29.6px;top:281.32px;width:1041.4px;height:20.58px;background:#d9e1f2;"></div>
<div class="r" style="left:125.7px;top:301.9px;width:1px;height:20.579999999999984px;background:#e4e4e4;"></div>
<div class="r" style="left:495.1px;top:301.9px;width:1px;height:20.579999999999984px;background:#e4e4e4;"></div>
<div class="r" style="left:595.6px;top:301.9px;width:1px;height:20.579999999999984px;background:#e4e4e4;"></div>
<div class="r" style="left:746.0px;top:301.9px;width:1px;height:20.579999999999984px;background:#e4e4e4;"></div>
<div class="r" style="left:817.5px;top:301.9px;width:1px;height:20.579999999999984px;background:#e4e4e4;"></div>
<div class="r" style="left:897.1px;top:301.9px;width:1px;height:20.579999999999984px;background:#e4e4e4;"></div>
<div class="r" style="left:991.0px;top:301.9px;width:1px;height:20.579999999999984px;background:#e4e4e4;"></div>
<div class="r" style="left:1049.0px;top:301.9px;width:1px;height:20.579999999999984px;background:#e4e4e4;"></div>
<div class="r" style="left:29.6px;top:322.48px;width:1041.4px;height:20.58px;background:#d9e1f2;"></div>
<div class="r" style="left:125.7px;top:343.06px;width:1px;height:20.579999999999984px;background:#e4e4e4;"></div>
<div class="r" style="left:495.1px;top:343.06px;width:1px;height:20.579999999999984px;background:#e4e4e4;"></div>
<div class="r" style="left:595.6px;top:343.06px;width:1px;height:20.579999999999984px;background:#e4e4e4;"></div>
<div class="r" style="left:746.0px;top:343.06px;width:1px;height:20.579999999999984px;background:#e4e4e4;"></div>
<div class="r" style="left:817.5px;top:343.06px;width:1px;height:20.579999999999984px;background:#e4e4e4;"></div>
<div class="r" style="left:897.1px;top:343.06px;width:1px;height:20.579999999999984px;background:#e4e4e4;"></div>
<div class="r" style="left:991.0px;top:343.06px;width:1px;height:20.579999999999984px;background:#e4e4e4;"></div>
<div class="r" style="left:1049.0px;top:343.06px;width:1px;height:20.579999999999984px;background:#e4e4e4;"></div>
<div class="r" style="left:29.6px;top:363.64px;width:1041.4px;height:20.58px;background:#d9e1f2;"></div>
<div class="r" style="left:125.7px;top:384.21999999999997px;width:1px;height:20.579999999999984px;background:#e4e4e4;"></div>
<div class="r" style="left:495.1px;top:384.21999999999997px;width:1px;height:20.579999999999984px;background:#e4e4e4;"></div>
<div class="r" style="left:595.6px;top:384.21999999999997px;width:1px;height:20.579999999999984px;background:#e4e4e4;"></div>
<div class="r" style="left:746.0px;top:384.21999999999997px;width:1px;height:20.579999999999984px;background:#e4e4e4;"></div>
<div class="r" style="left:817.5px;top:384.21999999999997px;width:1px;height:20.579999999999984px;background:#e4e4e4;"></div>
<div class="r" style="left:897.1px;top:384.21999999999997px;width:1px;height:20.579999999999984px;background:#e4e4e4;"></div>
<div class="r" style="left:991.0px;top:384.21999999999997px;width:1px;height:20.579999999999984px;background:#e4e4e4;"></div>
<div class="r" style="left:1049.0px;top:384.21999999999997px;width:1px;height:20.579999999999984px;background:#e4e4e4;"></div>
<div class="r" style="left:29.6px;top:404.79999999999995px;width:1041.4px;height:20.58px;background:#d9e1f2;"></div>
<div class="r" style="left:125.7px;top:425.38px;width:1px;height:20.579999999999984px;background:#e4e4e4;"></div>
<div class="r" style="left:495.1px;top:425.38px;width:1px;height:20.579999999999984px;background:#e4e4e4;"></div>
<div class="r" style="left:595.6px;top:425.38px;width:1px;height:20.579999999999984px;background:#e4e4e4;"></div>
<div class="r" style="left:746.0px;top:425.38px;width:1px;height:20.579999999999984px;background:#e4e4e4;"></div>
<div class="r" style="left:817.5px;top:425.38px;width:1px;height:20.579999999999984px;background:#e4e4e4;"></div>
<div class="r" style="left:897.1px;top:425.38px;width:1px;height:20.579999999999984px;background:#e4e4e4;"></div>
<div class="r" style="left:991.0px;top:425.38px;width:1px;height:20.579999999999984px;background:#e4e4e4;"></div>
<div class="r" style="left:1049.0px;top:425.38px;width:1px;height:20.579999999999984px;background:#e4e4e4;"></div>
<div class="r" style="left:29.6px;top:445.96px;width:1041.4px;height:20.58px;background:#d9e1f2;"></div>
<div class="r" style="left:125.7px;top:466.53999999999996px;width:1px;height:20.579999999999984px;background:#e4e4e4;"></div>
<div class="r" style="left:495.1px;top:466.53999999999996px;width:1px;height:20.579999999999984px;background:#e4e4e4;"></div>
<div class="r" style="left:595.6px;top:466.53999999999996px;width:1px;height:20.579999999999984px;background:#e4e4e4;"></div>
<div class="r" style="left:746.0px;top:466.53999999999996px;width:1px;height:20.579999999999984px;background:#e4e4e4;"></div>
<div class="r" style="left:817.5px;top:466.53999999999996px;width:1px;height:20.579999999999984px;background:#e4e4e4;"></div>
<div class="r" style="left:897.1px;top:466.53999999999996px;width:1px;height:20.579999999999984px;background:#e4e4e4;"></div>
<div class="r" style="left:991.0px;top:466.53999999999996px;width:1px;height:20.579999999999984px;background:#e4e4e4;"></div>
<div class="r" style="left:1049.0px;top:466.53999999999996px;width:1px;height:20.579999999999984px;background:#e4e4e4;"></div>
<div class="r" style="left:29.6px;top:487.12px;width:1041.4px;height:20.58px;background:#d9e1f2;"></div>
<div class="r" style="left:125.7px;top:507.7px;width:1px;height:20.579999999999984px;background:#e4e4e4;"></div>
<div class="r" style="left:495.1px;top:507.7px;width:1px;height:20.579999999999984px;background:#e4e4e4;"></div>
<div class="r" style="left:595.6px;top:507.7px;width:1px;height:20.579999999999984px;background:#e4e4e4;"></div>
<div class="r" style="left:746.0px;top:507.7px;width:1px;height:20.579999999999984px;background:#e4e4e4;"></div>
<div class="r" style="left:817.5px;top:507.7px;width:1px;height:20.579999999999984px;background:#e4e4e4;"></div>
<div class="r" style="left:897.1px;top:507.7px;width:1px;height:20.579999999999984px;background:#e4e4e4;"></div>
<div class="r" style="left:991.0px;top:507.7px;width:1px;height:20.579999999999984px;background:#e4e4e4;"></div>
<div class="r" style="left:1049.0px;top:507.7px;width:1px;height:20.579999999999984px;background:#e4e4e4;"></div>
<div class="r" style="left:29.6px;top:528.28px;width:1041.4px;height:20.58px;background:#d9e1f2;"></div>
<div class="r" style="left:0px;top:528.28px;width:28.6px;height:20.58px;background:#d2d2d2;"></div>
<div class="r" style="left:29.6px;top:548.8599999999999px;width:1041.4px;height:20.58px;background:#d9d9d9;"></div>
<div class="r" style="left:29.6px;top:569.4399999999999px;width:1041.4px;height:20.58px;background:#d9e1f2;"></div>
<div class="r" style="left:125.7px;top:590.02px;width:1px;height:20.58000000000004px;background:#e4e4e4;"></div>
<div class="r" style="left:495.1px;top:590.02px;width:1px;height:20.58000000000004px;background:#e4e4e4;"></div>
<div class="r" style="left:595.6px;top:590.02px;width:1px;height:20.58000000000004px;background:#e4e4e4;"></div>
<div class="r" style="left:746.0px;top:590.02px;width:1px;height:20.58000000000004px;background:#e4e4e4;"></div>
<div class="r" style="left:817.5px;top:590.02px;width:1px;height:20.58000000000004px;background:#e4e4e4;"></div>
<div class="r" style="left:897.1px;top:590.02px;width:1px;height:20.58000000000004px;background:#e4e4e4;"></div>
<div class="r" style="left:991.0px;top:590.02px;width:1px;height:20.58000000000004px;background:#e4e4e4;"></div>
<div class="r" style="left:1049.0px;top:590.02px;width:1px;height:20.58000000000004px;background:#e4e4e4;"></div>
<div class="r" style="left:29.6px;top:610.5999999999999px;width:1041.4px;height:20.58px;background:#d9e1f2;"></div>
<div class="r" style="left:125.7px;top:631.18px;width:1px;height:20.58000000000004px;background:#e4e4e4;"></div>
<div class="r" style="left:495.1px;top:631.18px;width:1px;height:20.58000000000004px;background:#e4e4e4;"></div>
<div class="r" style="left:595.6px;top:631.18px;width:1px;height:20.58000000000004px;background:#e4e4e4;"></div>
<div class="r" style="left:746.0px;top:631.18px;width:1px;height:20.58000000000004px;background:#e4e4e4;"></div>
<div class="r" style="left:817.5px;top:631.18px;width:1px;height:20.58000000000004px;background:#e4e4e4;"></div>
<div class="r" style="left:897.1px;top:631.18px;width:1px;height:20.58000000000004px;background:#e4e4e4;"></div>
<div class="r" style="left:991.0px;top:631.18px;width:1px;height:20.58000000000004px;background:#e4e4e4;"></div>
<div class="r" style="left:1049.0px;top:631.18px;width:1px;height:20.58000000000004px;background:#e4e4e4;"></div>
<div class="r" style="left:29.6px;top:651.76px;width:1041.4px;height:20.58px;background:#d9e1f2;"></div>
<div class="r" style="left:125.7px;top:672.3399999999999px;width:1px;height:20.58000000000004px;background:#e4e4e4;"></div>
<div class="r" style="left:495.1px;top:672.3399999999999px;width:1px;height:20.58000000000004px;background:#e4e4e4;"></div>
<div class="r" style="left:595.6px;top:672.3399999999999px;width:1px;height:20.58000000000004px;background:#e4e4e4;"></div>
<div class="r" style="left:746.0px;top:672.3399999999999px;width:1px;height:20.58000000000004px;background:#e4e4e4;"></div>
<div class="r" style="left:817.5px;top:672.3399999999999px;width:1px;height:20.58000000000004px;background:#e4e4e4;"></div>
<div class="r" style="left:897.1px;top:672.3399999999999px;width:1px;height:20.58000000000004px;background:#e4e4e4;"></div>
<div class="r" style="left:991.0px;top:672.3399999999999px;width:1px;height:20.58000000000004px;background:#e4e4e4;"></div>
<div class="r" style="left:1049.0px;top:672.3399999999999px;width:1px;height:20.58000000000004px;background:#e4e4e4;"></div>
<div class="r" style="left:125.7px;top:692.92px;width:1px;height:14.379999999999995px;background:#e4e4e4;"></div>
<div class="r" style="left:495.1px;top:692.92px;width:1px;height:14.379999999999995px;background:#e4e4e4;"></div>
<div class="r" style="left:595.6px;top:692.92px;width:1px;height:14.379999999999995px;background:#e4e4e4;"></div>
<div class="r" style="left:746.0px;top:692.92px;width:1px;height:14.379999999999995px;background:#e4e4e4;"></div>
<div class="r" style="left:817.5px;top:692.92px;width:1px;height:14.379999999999995px;background:#e4e4e4;"></div>
<div class="r" style="left:897.1px;top:692.92px;width:1px;height:14.379999999999995px;background:#e4e4e4;"></div>
<div class="r" style="left:991.0px;top:692.92px;width:1px;height:14.379999999999995px;background:#e4e4e4;"></div>
<div class="r" style="left:1049.0px;top:692.92px;width:1px;height:14.379999999999995px;background:#e4e4e4;"></div>
<div class="r" style="left:29.6px;top:219.02999999999997px;width:1041.4px;height:1.1px;background:#b4c6e7;"></div>
<div class="r" style="left:0px;top:219.07999999999998px;width:28.6px;height:1px;background:#d4d4d4;"></div>
<div class="r" style="left:29.6px;top:239.60999999999996px;width:1041.4px;height:1.1px;background:#b4c6e7;"></div>
<div class="r" style="left:0px;top:239.65999999999997px;width:28.6px;height:1px;background:#d4d4d4;"></div>
<div class="r" style="left:29.6px;top:260.19px;width:1041.4px;height:1.1px;background:#b4c6e7;"></div>
<div class="r" style="left:0px;top:260.24px;width:28.6px;height:1px;background:#d4d4d4;"></div>
<div class="r" style="left:29.6px;top:280.77px;width:1041.4px;height:1.1px;background:#b4c6e7;"></div>
<div class="r" style="left:0px;top:280.82px;width:28.6px;height:1px;background:#d4d4d4;"></div>
<div class="r" style="left:29.6px;top:301.34999999999997px;width:1041.4px;height:1.1px;background:#b4c6e7;"></div>
<div class="r" style="left:0px;top:301.4px;width:28.6px;height:1px;background:#d4d4d4;"></div>
<div class="r" style="left:29.6px;top:321.92999999999995px;width:1041.4px;height:1.1px;background:#b4c6e7;"></div>
<div class="r" style="left:0px;top:321.97999999999996px;width:28.6px;height:1px;background:#d4d4d4;"></div>
<div class="r" style="left:29.6px;top:342.51px;width:1041.4px;height:1.1px;background:#b4c6e7;"></div>
<div class="r" style="left:0px;top:342.56px;width:28.6px;height:1px;background:#d4d4d4;"></div>
<div class="r" style="left:29.6px;top:363.09px;width:1041.4px;height:1.1px;background:#b4c6e7;"></div>
<div class="r" style="left:0px;top:363.14px;width:28.6px;height:1px;background:#d4d4d4;"></div>
<div class="r" style="left:29.6px;top:383.66999999999996px;width:1041.4px;height:1.1px;background:#b4c6e7;"></div>
<div class="r" style="left:0px;top:383.71999999999997px;width:28.6px;height:1px;background:#d4d4d4;"></div>
<div class="r" style="left:29.6px;top:404.24999999999994px;width:1041.4px;height:1.1px;background:#b4c6e7;"></div>
<div class="r" style="left:0px;top:404.29999999999995px;width:28.6px;height:1px;background:#d4d4d4;"></div>
<div class="r" style="left:29.6px;top:424.8299999999999px;width:1041.4px;height:1.1px;background:#b4c6e7;"></div>
<div class="r" style="left:0px;top:424.87999999999994px;width:28.6px;height:1px;background:#d4d4d4;"></div>
<div class="r" style="left:29.6px;top:445.40999999999997px;width:1041.4px;height:1.1px;background:#b4c6e7;"></div>
<div class="r" style="left:0px;top:445.46px;width:28.6px;height:1px;background:#d4d4d4;"></div>
<div class="r" style="left:29.6px;top:465.98999999999995px;width:1041.4px;height:1.1px;background:#b4c6e7;"></div>
<div class="r" style="left:0px;top:466.03999999999996px;width:28.6px;height:1px;background:#d4d4d4;"></div>
<div class="r" style="left:29.6px;top:486.56999999999994px;width:1041.4px;height:1.1px;background:#b4c6e7;"></div>
<div class="r" style="left:0px;top:486.61999999999995px;width:28.6px;height:1px;background:#d4d4d4;"></div>
<div class="r" style="left:29.6px;top:507.15px;width:1041.4px;height:1.1px;background:#b4c6e7;"></div>
<div class="r" style="left:0px;top:507.2px;width:28.6px;height:1px;background:#d4d4d4;"></div>
<div class="r" style="left:29.6px;top:527.73px;width:1041.4px;height:1.1px;background:#b4c6e7;"></div>
<div class="r" style="left:0px;top:527.78px;width:28.6px;height:1px;background:#d4d4d4;"></div>
<div class="r" style="left:29.6px;top:548.3100000000001px;width:1041.4px;height:1.1px;background:#b4c6e7;"></div>
<div class="r" style="left:0px;top:548.36px;width:28.6px;height:1px;background:#d4d4d4;"></div>
<div class="r" style="left:29.6px;top:568.89px;width:1041.4px;height:1.1px;background:#b4c6e7;"></div>
<div class="r" style="left:0px;top:568.9399999999999px;width:28.6px;height:1px;background:#d4d4d4;"></div>
<div class="r" style="left:29.6px;top:589.47px;width:1041.4px;height:1.1px;background:#b4c6e7;"></div>
<div class="r" style="left:0px;top:589.52px;width:28.6px;height:1px;background:#d4d4d4;"></div>
<div class="r" style="left:29.6px;top:610.0500000000001px;width:1041.4px;height:1.1px;background:#b4c6e7;"></div>
<div class="r" style="left:0px;top:610.1px;width:28.6px;height:1px;background:#d4d4d4;"></div>
<div class="r" style="left:29.6px;top:630.63px;width:1041.4px;height:1.1px;background:#b4c6e7;"></div>
<div class="r" style="left:0px;top:630.68px;width:28.6px;height:1px;background:#d4d4d4;"></div>
<div class="r" style="left:29.6px;top:651.21px;width:1041.4px;height:1.1px;background:#b4c6e7;"></div>
<div class="r" style="left:0px;top:651.26px;width:28.6px;height:1px;background:#d4d4d4;"></div>
<div class="r" style="left:29.6px;top:671.7900000000001px;width:1041.4px;height:1.1px;background:#b4c6e7;"></div>
<div class="r" style="left:0px;top:671.84px;width:28.6px;height:1px;background:#d4d4d4;"></div>
<div class="r" style="left:29.6px;top:692.37px;width:1041.4px;height:1.1px;background:#b4c6e7;"></div>
<div class="r" style="left:0px;top:692.42px;width:28.6px;height:1px;background:#d4d4d4;"></div>
<div class="t" style="left:-186px;width:400px;text-align:center;top:199.59px;font-size:14.2px;line-height:20px;color:#262626;">15</div>
<div class="t" style="left:32px;top:200.49px;font-size:14.4px;line-height:20px;color:#111;transform:scaleX(1.0139);transform-origin:0 50%;">345</div>
<div class="t" style="left:129.0px;top:200.49px;font-size:14.4px;line-height:20px;color:#111;transform:scaleX(0.9826);transform-origin:0 50%;">Facilitate implementation of Production</div>
<div class="t" style="left:599.4px;top:200.49px;font-size:14.95px;line-height:20px;color:#111;transform:scaleX(1.0000);transform-origin:0 50%;">5/13/2023 0:00</div>
<div class="t" style="left:750px;top:200.49px;font-size:14.4px;line-height:20px;color:#111;transform:scaleX(0.9757);transform-origin:0 50%;">Normal</div>
<div class="t" style="left:821.5px;top:200.49px;font-size:14.4px;line-height:20px;color:#111;transform:scaleX(0.9236);transform-origin:0 50%;">In Progress</div>
<div class="t" style="left:901px;top:200.49px;font-size:14.4px;line-height:20px;color:#111;transform:scaleX(0.9861);transform-origin:0 50%;">Appvity.eTask</div>
<div class="t" style="left:-186px;width:400px;text-align:center;top:220.17px;font-size:14.2px;line-height:20px;color:#262626;">16</div>
<div class="t" style="left:32px;top:221.07px;font-size:14.4px;line-height:20px;color:#111;transform:scaleX(1.0139);transform-origin:0 50%;">344</div>
<div class="t" style="left:129.0px;top:221.07px;font-size:14.4px;line-height:20px;color:#111;transform:scaleX(0.9826);transform-origin:0 50%;">Remove pop-up dialog in dashboard</div>
<div class="t" style="left:599.4px;top:221.07px;font-size:14.95px;line-height:20px;color:#111;transform:scaleX(1.0000);transform-origin:0 50%;">5/12/2023 0:00</div>
<div class="t" style="left:750px;top:221.07px;font-size:14.4px;line-height:20px;color:#111;transform:scaleX(0.9236);transform-origin:0 50%;">High</div>
<div class="t" style="left:821.5px;top:221.07px;font-size:14.4px;line-height:20px;color:#111;transform:scaleX(0.9236);transform-origin:0 50%;">In Progress</div>
<div class="t" style="left:901px;top:221.07px;font-size:14.4px;line-height:20px;color:#111;transform:scaleX(0.9861);transform-origin:0 50%;">Appvity.eTask</div>
<div class="t" style="left:-186px;width:400px;text-align:center;top:240.75px;font-size:14.2px;line-height:20px;color:#262626;">17</div>
<div class="t" style="left:32px;top:241.65px;font-size:14.4px;line-height:20px;color:#111;transform:scaleX(1.0139);transform-origin:0 50%;">343</div>
<div class="t" style="left:129.0px;top:241.65px;font-size:14.4px;line-height:20px;color:#111;transform:scaleX(0.9826);transform-origin:0 50%;">Remove unmaintainable flow</div>
<div class="t" style="left:599.4px;top:241.65px;font-size:14.95px;line-height:20px;color:#111;transform:scaleX(1.0000);transform-origin:0 50%;">3/30/2023 0:00</div>
<div class="t" style="left:750px;top:241.65px;font-size:14.4px;line-height:20px;color:#111;transform:scaleX(0.9236);transform-origin:0 50%;">High</div>
<div class="t" style="left:821.5px;top:241.65px;font-size:14.4px;line-height:20px;color:#111;transform:scaleX(0.9236);transform-origin:0 50%;">In Progress</div>
<div class="t" style="left:901px;top:241.65px;font-size:14.4px;line-height:20px;color:#111;transform:scaleX(0.9861);transform-origin:0 50%;">Appvity.eTask</div>
<div class="t" style="left:-186px;width:400px;text-align:center;top:261.33px;font-size:14.2px;line-height:20px;color:#262626;">18</div>
<div class="t" style="left:32px;top:262.23px;font-size:14.4px;line-height:20px;color:#111;transform:scaleX(1.0139);transform-origin:0 50%;">342</div>
<div class="t" style="left:129.0px;top:262.23px;font-size:14.4px;line-height:20px;color:#111;transform:scaleX(0.9826);transform-origin:0 50%;">Create system template</div>
<div class="t" style="left:599.4px;top:262.23px;font-size:14.95px;line-height:20px;color:#111;transform:scaleX(1.0000);transform-origin:0 50%;">3/30/2023 0:00</div>
<div class="t" style="left:750px;top:262.23px;font-size:14.4px;line-height:20px;color:#111;transform:scaleX(0.9236);transform-origin:0 50%;">High</div>
<div class="t" style="left:821.5px;top:262.23px;font-size:14.4px;line-height:20px;color:#111;transform:scaleX(0.9583);transform-origin:0 50%;">On Hold</div>
<div class="t" style="left:901px;top:262.23px;font-size:14.4px;line-height:20px;color:#111;transform:scaleX(0.9861);transform-origin:0 50%;">Appvity.eTask</div>
<div class="t" style="left:-186px;width:400px;text-align:center;top:281.91px;font-size:14.2px;line-height:20px;color:#262626;">19</div>
<div class="t" style="left:32px;top:282.81px;font-size:14.4px;line-height:20px;color:#111;transform:scaleX(1.0139);transform-origin:0 50%;">341</div>
<div class="t" style="left:129.0px;top:282.81px;font-size:14.4px;line-height:20px;color:#111;transform:scaleX(0.9826);transform-origin:0 50%;">Develop planning process dashboard</div>
<div class="t" style="left:599.4px;top:282.81px;font-size:14.95px;line-height:20px;color:#111;transform:scaleX(1.0000);transform-origin:0 50%;">3/30/2023 0:00</div>
<div class="t" style="left:750px;top:282.81px;font-size:14.4px;line-height:20px;color:#111;transform:scaleX(0.9757);transform-origin:0 50%;">Normal</div>
<div class="t" style="left:821.5px;top:282.81px;font-size:14.4px;line-height:20px;color:#111;transform:scaleX(0.9583);transform-origin:0 50%;">On Hold</div>
<div class="t" style="left:901px;top:282.81px;font-size:14.4px;line-height:20px;color:#111;transform:scaleX(0.9861);transform-origin:0 50%;">Appvity.eTask</div>
<div class="t" style="left:-186px;width:400px;text-align:center;top:302.49px;font-size:14.2px;line-height:20px;color:#262626;">20</div>
<div class="t" style="left:32px;top:303.39px;font-size:14.4px;line-height:20px;color:#111;transform:scaleX(1.0139);transform-origin:0 50%;">340</div>
<div class="t" style="left:129.0px;top:303.39px;font-size:14.4px;line-height:20px;color:#111;transform:scaleX(0.9826);transform-origin:0 50%;">Maintain assessment and reporting system</div>
<div class="t" style="left:599.4px;top:303.39px;font-size:14.95px;line-height:20px;color:#111;transform:scaleX(1.0000);transform-origin:0 50%;">5/13/2023 0:00</div>
<div class="t" style="left:750px;top:303.39px;font-size:14.4px;line-height:20px;color:#111;transform:scaleX(0.9757);transform-origin:0 50%;">Normal</div>
<div class="t" style="left:821.5px;top:303.39px;font-size:14.4px;line-height:20px;color:#111;transform:scaleX(0.9583);transform-origin:0 50%;">On Hold</div>
<div class="t" style="left:901px;top:303.39px;font-size:14.4px;line-height:20px;color:#111;transform:scaleX(0.9861);transform-origin:0 50%;">Appvity.eTask</div>
<div class="t" style="left:-186px;width:400px;text-align:center;top:323.07px;font-size:14.2px;line-height:20px;color:#262626;">21</div>
<div class="t" style="left:32px;top:323.97px;font-size:14.4px;line-height:20px;color:#111;transform:scaleX(1.0139);transform-origin:0 50%;">339</div>
<div class="t" style="left:129.0px;top:323.97px;font-size:14.4px;line-height:20px;color:#111;transform:scaleX(0.9826);transform-origin:0 50%;">Identify response timing</div>
<div class="t" style="left:599.4px;top:323.97px;font-size:14.95px;line-height:20px;color:#111;transform:scaleX(1.0000);transform-origin:0 50%;">5/21/2023 0:00</div>
<div class="t" style="left:750px;top:323.97px;font-size:14.4px;line-height:20px;color:#111;transform:scaleX(0.9236);transform-origin:0 50%;">High</div>
<div class="t" style="left:821.5px;top:323.97px;font-size:14.4px;line-height:20px;color:#111;transform:scaleX(0.9236);transform-origin:0 50%;">In Progress</div>
<div class="t" style="left:901px;top:323.97px;font-size:14.4px;line-height:20px;color:#111;transform:scaleX(0.9861);transform-origin:0 50%;">Appvity.eTask</div>
<div class="t" style="left:-186px;width:400px;text-align:center;top:343.65px;font-size:14.2px;line-height:20px;color:#262626;">22</div>
<div class="t" style="left:32px;top:344.55px;font-size:14.4px;line-height:20px;color:#111;transform:scaleX(1.0139);transform-origin:0 50%;">338</div>
<div class="t" style="left:129.0px;top:344.55px;font-size:14.4px;line-height:20px;color:#111;transform:scaleX(0.9826);transform-origin:0 50%;">Change header title on map</div>
<div class="t" style="left:599.4px;top:344.55px;font-size:14.95px;line-height:20px;color:#111;transform:scaleX(1.0000);transform-origin:0 50%;">5/20/2023 0:00</div>
<div class="t" style="left:750px;top:344.55px;font-size:14.4px;line-height:20px;color:#111;transform:scaleX(0.9757);transform-origin:0 50%;">Normal</div>
<div class="t" style="left:821.5px;top:344.55px;font-size:14.4px;line-height:20px;color:#111;transform:scaleX(0.9792);transform-origin:0 50%;">Not Started</div>
<div class="t" style="left:901px;top:344.55px;font-size:14.4px;line-height:20px;color:#111;transform:scaleX(0.9861);transform-origin:0 50%;">Appvity.eTask</div>
<div class="t" style="left:-186px;width:400px;text-align:center;top:364.23px;font-size:14.2px;line-height:20px;color:#262626;">23</div>
<div class="t" style="left:32px;top:365.13px;font-size:14.4px;line-height:20px;color:#111;transform:scaleX(1.0139);transform-origin:0 50%;">337</div>
<div class="t" style="left:129.0px;top:365.13px;font-size:14.4px;line-height:20px;color:#111;transform:scaleX(0.9826);transform-origin:0 50%;">Check dashboard workflow</div>
<div class="t" style="left:599.4px;top:365.13px;font-size:14.95px;line-height:20px;color:#111;transform:scaleX(1.0000);transform-origin:0 50%;">5/19/2023 0:00</div>
<div class="t" style="left:750px;top:365.13px;font-size:14.4px;line-height:20px;color:#111;transform:scaleX(0.9757);transform-origin:0 50%;">Normal</div>
<div class="t" style="left:821.5px;top:365.13px;font-size:14.4px;line-height:20px;color:#111;transform:scaleX(0.9792);transform-origin:0 50%;">Not Started</div>
<div class="t" style="left:901px;top:365.13px;font-size:14.4px;line-height:20px;color:#111;transform:scaleX(0.9861);transform-origin:0 50%;">Appvity.eTask</div>
<div class="t" style="left:-186px;width:400px;text-align:center;top:384.81px;font-size:14.2px;line-height:20px;color:#262626;">24</div>
<div class="t" style="left:32px;top:385.71px;font-size:14.4px;line-height:20px;color:#111;transform:scaleX(1.0139);transform-origin:0 50%;">336</div>
<div class="t" style="left:129.0px;top:385.71px;font-size:14.4px;line-height:20px;color:#111;transform:scaleX(0.9826);transform-origin:0 50%;">Pull data from Production</div>
<div class="t" style="left:599.4px;top:385.71px;font-size:14.95px;line-height:20px;color:#111;transform:scaleX(1.0000);transform-origin:0 50%;">5/18/2023 0:00</div>
<div class="t" style="left:750px;top:385.71px;font-size:14.4px;line-height:20px;color:#111;transform:scaleX(0.9236);transform-origin:0 50%;">High</div>
<div class="t" style="left:821.5px;top:385.71px;font-size:14.4px;line-height:20px;color:#111;transform:scaleX(0.9236);transform-origin:0 50%;">In Progress</div>
<div class="t" style="left:901px;top:385.71px;font-size:14.4px;line-height:20px;color:#111;transform:scaleX(0.9861);transform-origin:0 50%;">Appvity.eTask</div>
<div class="t" style="left:-186px;width:400px;text-align:center;top:405.39px;font-size:14.2px;line-height:20px;color:#262626;">25</div>
<div class="t" style="left:32px;top:406.29px;font-size:14.4px;line-height:20px;color:#111;transform:scaleX(1.0139);transform-origin:0 50%;">335</div>
<div class="t" style="left:129.0px;top:406.29px;font-size:14.4px;line-height:20px;color:#111;transform:scaleX(0.9826);transform-origin:0 50%;">Integrate developing planning</div>
<div class="t" style="left:599.4px;top:406.29px;font-size:14.95px;line-height:20px;color:#111;transform:scaleX(1.0000);transform-origin:0 50%;">5/6/2023 0:00</div>
<div class="t" style="left:750px;top:406.29px;font-size:14.4px;line-height:20px;color:#111;transform:scaleX(0.9236);transform-origin:0 50%;">High</div>
<div class="t" style="left:821.5px;top:406.29px;font-size:14.4px;line-height:20px;color:#111;transform:scaleX(0.9236);transform-origin:0 50%;">In Progress</div>
<div class="t" style="left:901px;top:406.29px;font-size:14.4px;line-height:20px;color:#111;transform:scaleX(0.9861);transform-origin:0 50%;">Appvity.eTask</div>
<div class="t" style="left:-186px;width:400px;text-align:center;top:425.97px;font-size:14.2px;line-height:20px;color:#262626;">26</div>
<div class="t" style="left:32px;top:426.87px;font-size:14.4px;line-height:20px;color:#111;transform:scaleX(1.0139);transform-origin:0 50%;">334</div>
<div class="t" style="left:129.0px;top:426.87px;font-size:14.4px;line-height:20px;color:#111;transform:scaleX(0.9826);transform-origin:0 50%;">Add an additional column to task list</div>
<div class="t" style="left:599.4px;top:426.87px;font-size:14.95px;line-height:20px;color:#111;transform:scaleX(1.0000);transform-origin:0 50%;">5/5/2023 0:00</div>
<div class="t" style="left:750px;top:426.87px;font-size:14.4px;line-height:20px;color:#111;transform:scaleX(0.9757);transform-origin:0 50%;">Normal</div>
<div class="t" style="left:821.5px;top:426.87px;font-size:14.4px;line-height:20px;color:#111;transform:scaleX(0.9236);transform-origin:0 50%;">In Progress</div>
<div class="t" style="left:901px;top:426.87px;font-size:14.4px;line-height:20px;color:#111;transform:scaleX(0.9861);transform-origin:0 50%;">Appvity.eTask</div>
<div class="t" style="left:-186px;width:400px;text-align:center;top:446.55px;font-size:14.2px;line-height:20px;color:#262626;">27</div>
<div class="t" style="left:32px;top:447.45px;font-size:14.4px;line-height:20px;color:#111;transform:scaleX(1.0139);transform-origin:0 50%;">333</div>
<div class="t" style="left:129.0px;top:447.45px;font-size:14.4px;line-height:20px;color:#111;transform:scaleX(0.9826);transform-origin:0 50%;">Develop dashboard analytics</div>
<div class="t" style="left:599.4px;top:447.45px;font-size:14.95px;line-height:20px;color:#111;transform:scaleX(1.0000);transform-origin:0 50%;">5/18/2023 0:00</div>
<div class="t" style="left:750px;top:447.45px;font-size:14.4px;line-height:20px;color:#111;transform:scaleX(0.9757);transform-origin:0 50%;">Normal</div>
<div class="t" style="left:821.5px;top:447.45px;font-size:14.4px;line-height:20px;color:#111;transform:scaleX(0.9792);transform-origin:0 50%;">Not Started</div>
<div class="t" style="left:901px;top:447.45px;font-size:14.4px;line-height:20px;color:#111;transform:scaleX(0.9861);transform-origin:0 50%;">Appvity.eTask</div>
<div class="t" style="left:-186px;width:400px;text-align:center;top:467.13px;font-size:14.2px;line-height:20px;color:#262626;">28</div>
<div class="t" style="left:32px;top:468.03px;font-size:14.4px;line-height:20px;color:#111;transform:scaleX(1.0139);transform-origin:0 50%;">332</div>
<div class="t" style="left:129.0px;top:468.03px;font-size:14.4px;line-height:20px;color:#111;transform:scaleX(0.9826);transform-origin:0 50%;">Update company policies</div>
<div class="t" style="left:599.4px;top:468.03px;font-size:14.95px;line-height:20px;color:#111;transform:scaleX(1.0000);transform-origin:0 50%;">5/17/2023 0:00</div>
<div class="t" style="left:750px;top:468.03px;font-size:14.4px;line-height:20px;color:#111;transform:scaleX(0.9757);transform-origin:0 50%;">Normal</div>
<div class="t" style="left:821.5px;top:468.03px;font-size:14.4px;line-height:20px;color:#111;transform:scaleX(0.9792);transform-origin:0 50%;">Not Started</div>
<div class="t" style="left:901px;top:468.03px;font-size:14.4px;line-height:20px;color:#111;transform:scaleX(0.9861);transform-origin:0 50%;">Appvity.eTask</div>
<div class="t" style="left:-186px;width:400px;text-align:center;top:487.71px;font-size:14.2px;line-height:20px;color:#262626;">29</div>
<div class="t" style="left:32px;top:488.61px;font-size:14.4px;line-height:20px;color:#111;transform:scaleX(1.0139);transform-origin:0 50%;">331</div>
<div class="t" style="left:129.0px;top:488.61px;font-size:14.4px;line-height:20px;color:#111;transform:scaleX(0.9826);transform-origin:0 50%;">Facilitate implementation of system</div>
<div class="t" style="left:599.4px;top:488.61px;font-size:14.95px;line-height:20px;color:#111;transform:scaleX(1.0000);transform-origin:0 50%;">5/16/2023 0:00</div>
<div class="t" style="left:750px;top:488.61px;font-size:14.4px;line-height:20px;color:#111;transform:scaleX(0.9236);transform-origin:0 50%;">High</div>
<div class="t" style="left:821.5px;top:488.61px;font-size:14.4px;line-height:20px;color:#111;transform:scaleX(0.9792);transform-origin:0 50%;">Not Started</div>
<div class="t" style="left:901px;top:488.61px;font-size:14.4px;line-height:20px;color:#111;transform:scaleX(0.9861);transform-origin:0 50%;">Appvity.eTask</div>
<div class="t" style="left:-186px;width:400px;text-align:center;top:508.29px;font-size:14.2px;line-height:20px;color:#262626;">30</div>
<div class="t" style="left:32px;top:509.19px;font-size:14.4px;line-height:20px;color:#111;transform:scaleX(1.0139);transform-origin:0 50%;">330</div>
<div class="t" style="left:129.0px;top:509.19px;font-size:14.4px;line-height:20px;color:#111;transform:scaleX(0.9826);transform-origin:0 50%;">Define planning process</div>
<div class="t" style="left:599.4px;top:509.19px;font-size:14.95px;line-height:20px;color:#111;transform:scaleX(1.0000);transform-origin:0 50%;">5/15/2023 0:00</div>
<div class="t" style="left:750px;top:509.19px;font-size:14.4px;line-height:20px;color:#111;transform:scaleX(0.9236);transform-origin:0 50%;">Low</div>
<div class="t" style="left:821.5px;top:509.19px;font-size:14.4px;line-height:20px;color:#111;transform:scaleX(0.9792);transform-origin:0 50%;">Not Started</div>
<div class="t" style="left:901px;top:509.19px;font-size:14.4px;line-height:20px;color:#111;transform:scaleX(0.9861);transform-origin:0 50%;">Appvity.eTask</div>
<div class="r" style="left:27.3px;top:528.28px;width:2px;height:20.58px;background:#217346;"></div>
<div class="t" style="left:-186px;width:400px;text-align:center;top:528.87px;font-size:14.2px;line-height:20px;color:#217346;">31</div>
<div class="t" style="left:32px;top:529.77px;font-size:14.4px;line-height:20px;color:#111;transform:scaleX(1.0139);transform-origin:0 50%;">329</div>
<div class="t" style="left:129.0px;top:529.77px;font-size:14.4px;line-height:20px;color:#111;transform:scaleX(0.9826);transform-origin:0 50%;">Create an email template</div>
<div class="t" style="left:599.4px;top:529.77px;font-size:14.95px;line-height:20px;color:#111;transform:scaleX(1.0000);transform-origin:0 50%;">5/14/2023 0:00</div>
<div class="t" style="left:750px;top:529.77px;font-size:14.4px;line-height:20px;color:#111;transform:scaleX(0.9236);transform-origin:0 50%;">Low</div>
<div class="t" style="left:821.5px;top:529.77px;font-size:14.4px;line-height:20px;color:#111;transform:scaleX(0.9236);transform-origin:0 50%;">In Progress</div>
<div class="t" style="left:901px;top:529.77px;font-size:14.4px;line-height:20px;color:#111;transform:scaleX(0.9861);transform-origin:0 50%;">Appvity.eTask</div>
<div class="t" style="left:-186px;width:400px;text-align:center;top:549.45px;font-size:14.2px;line-height:20px;color:#262626;">32</div>
<div class="t" style="left:32px;top:550.35px;font-size:14.4px;line-height:20px;color:#111;transform:scaleX(1.0139);transform-origin:0 50%;">328</div>
<div class="t" style="left:-186px;width:400px;text-align:center;top:570.03px;font-size:14.2px;line-height:20px;color:#262626;">33</div>
<div class="t" style="left:32px;top:570.93px;font-size:14.4px;line-height:20px;color:#111;transform:scaleX(1.0139);transform-origin:0 50%;">327</div>
<div class="t" style="left:129.0px;top:570.93px;font-size:14.4px;line-height:20px;color:#111;transform:scaleX(0.9826);transform-origin:0 50%;">Set-up analytics</div>
<div class="t" style="left:599.4px;top:570.93px;font-size:14.95px;line-height:20px;color:#111;transform:scaleX(1.0000);transform-origin:0 50%;">5/5/2023 0:00</div>
<div class="t" style="left:750px;top:570.93px;font-size:14.4px;line-height:20px;color:#111;transform:scaleX(0.9236);transform-origin:0 50%;">Low</div>
<div class="t" style="left:821.5px;top:570.93px;font-size:14.4px;line-height:20px;color:#111;transform:scaleX(0.9583);transform-origin:0 50%;">On Hold</div>
<div class="t" style="left:901px;top:570.93px;font-size:14.4px;line-height:20px;color:#111;transform:scaleX(0.9861);transform-origin:0 50%;">Appvity.eTask</div>
<div class="t" style="left:-186px;width:400px;text-align:center;top:590.61px;font-size:14.2px;line-height:20px;color:#262626;">34</div>
<div class="t" style="left:32px;top:591.51px;font-size:14.4px;line-height:20px;color:#111;transform:scaleX(1.0139);transform-origin:0 50%;">326</div>
<div class="t" style="left:129.0px;top:591.51px;font-size:14.4px;line-height:20px;color:#111;transform:scaleX(0.9826);transform-origin:0 50%;">Identify response timing</div>
<div class="t" style="left:599.4px;top:591.51px;font-size:14.95px;line-height:20px;color:#111;transform:scaleX(1.0000);transform-origin:0 50%;">5/4/2023 0:00</div>
<div class="t" style="left:750px;top:591.51px;font-size:14.4px;line-height:20px;color:#111;transform:scaleX(0.9236);transform-origin:0 50%;">Low</div>
<div class="t" style="left:821.5px;top:591.51px;font-size:14.4px;line-height:20px;color:#111;transform:scaleX(0.9583);transform-origin:0 50%;">On Hold</div>
<div class="t" style="left:901px;top:591.51px;font-size:14.4px;line-height:20px;color:#111;transform:scaleX(0.9861);transform-origin:0 50%;">Appvity.eTask</div>
<div class="t" style="left:-186px;width:400px;text-align:center;top:611.19px;font-size:14.2px;line-height:20px;color:#262626;">35</div>
<div class="t" style="left:32px;top:612.09px;font-size:14.4px;line-height:20px;color:#111;transform:scaleX(1.0139);transform-origin:0 50%;">325</div>
<div class="t" style="left:129.0px;top:612.09px;font-size:14.4px;line-height:20px;color:#111;transform:scaleX(0.9826);transform-origin:0 50%;">Develop comprehensive management plan</div>
<div class="t" style="left:599.4px;top:612.09px;font-size:14.95px;line-height:20px;color:#111;transform:scaleX(1.0000);transform-origin:0 50%;">5/3/2023 0:00</div>
<div class="t" style="left:750px;top:612.09px;font-size:14.4px;line-height:20px;color:#111;transform:scaleX(0.9236);transform-origin:0 50%;">Low</div>
<div class="t" style="left:821.5px;top:612.09px;font-size:14.4px;line-height:20px;color:#111;transform:scaleX(0.9583);transform-origin:0 50%;">On Hold</div>
<div class="t" style="left:901px;top:612.09px;font-size:14.4px;line-height:20px;color:#111;transform:scaleX(0.9861);transform-origin:0 50%;">Appvity.eTask</div>
<div class="t" style="left:-186px;width:400px;text-align:center;top:631.77px;font-size:14.2px;line-height:20px;color:#262626;">36</div>
<div class="t" style="left:32px;top:632.67px;font-size:14.4px;line-height:20px;color:#111;transform:scaleX(1.0139);transform-origin:0 50%;">324</div>
<div class="t" style="left:129.0px;top:632.67px;font-size:14.4px;line-height:20px;color:#111;transform:scaleX(0.9826);transform-origin:0 50%;">Production enhancements</div>
<div class="t" style="left:599.4px;top:632.67px;font-size:14.95px;line-height:20px;color:#111;transform:scaleX(1.0000);transform-origin:0 50%;">5/2/2023 0:00</div>
<div class="t" style="left:750px;top:632.67px;font-size:14.4px;line-height:20px;color:#111;transform:scaleX(0.9236);transform-origin:0 50%;">High</div>
<div class="t" style="left:821.5px;top:632.67px;font-size:14.4px;line-height:20px;color:#111;transform:scaleX(0.9583);transform-origin:0 50%;">On Hold</div>
<div class="t" style="left:901px;top:632.67px;font-size:14.4px;line-height:20px;color:#111;transform:scaleX(0.9861);transform-origin:0 50%;">Appvity.eTask</div>
<div class="t" style="left:-186px;width:400px;text-align:center;top:652.35px;font-size:14.2px;line-height:20px;color:#262626;">37</div>
<div class="t" style="left:32px;top:653.25px;font-size:14.4px;line-height:20px;color:#111;transform:scaleX(1.0139);transform-origin:0 50%;">323</div>
<div class="t" style="left:129.0px;top:653.25px;font-size:14.4px;line-height:20px;color:#111;transform:scaleX(0.9826);transform-origin:0 50%;">Change default fields in dialog</div>
<div class="t" style="left:599.4px;top:653.25px;font-size:14.95px;line-height:20px;color:#111;transform:scaleX(1.0000);transform-origin:0 50%;">5/1/2023 0:00</div>
<div class="t" style="left:750px;top:653.25px;font-size:14.4px;line-height:20px;color:#111;transform:scaleX(0.9236);transform-origin:0 50%;">High</div>
<div class="t" style="left:821.5px;top:653.25px;font-size:14.4px;line-height:20px;color:#111;transform:scaleX(0.9236);transform-origin:0 50%;">In Progress</div>
<div class="t" style="left:901px;top:653.25px;font-size:14.4px;line-height:20px;color:#111;transform:scaleX(0.9861);transform-origin:0 50%;">Appvity.eTask</div>
<div class="t" style="left:-186px;width:400px;text-align:center;top:672.93px;font-size:14.2px;line-height:20px;color:#262626;">38</div>
<div class="t" style="left:32px;top:673.83px;font-size:14.4px;line-height:20px;color:#111;transform:scaleX(1.0139);transform-origin:0 50%;">322</div>
<div class="t" style="left:129.0px;top:673.83px;font-size:14.4px;line-height:20px;color:#111;transform:scaleX(0.9826);transform-origin:0 50%;">Remove viewer from user list</div>
<div class="t" style="left:599.4px;top:673.83px;font-size:14.95px;line-height:20px;color:#111;transform:scaleX(1.0000);transform-origin:0 50%;">4/30/2023 0:00</div>
<div class="t" style="left:750px;top:673.83px;font-size:14.4px;line-height:20px;color:#111;transform:scaleX(0.9236);transform-origin:0 50%;">High</div>
<div class="t" style="left:821.5px;top:673.83px;font-size:14.4px;line-height:20px;color:#111;transform:scaleX(0.9792);transform-origin:0 50%;">Not Started</div>
<div class="t" style="left:901px;top:673.83px;font-size:14.4px;line-height:20px;color:#111;transform:scaleX(0.9861);transform-origin:0 50%;">Appvity.eTask</div>
<div class="t" style="left:-186px;width:400px;text-align:center;top:693.51px;font-size:14.2px;line-height:20px;color:#262626;">39</div>
<div class="r" style="left:125.6px;top:527.38px;width:371px;height:22.58px;border:1.9px solid #217346;box-shadow:inset 0 0 0 1px rgba(255,255,255,0.85);"></div>
<div class="r" style="left:493.3px;top:547.46px;width:4.2px;height:4.2px;background:#217346;outline:0.5px solid rgba(255,255,255,0.7);"></div>
<div class="r" style="left:1071px;top:178.8px;width:19.5px;height:529px;background:#e6e6e6;"></div>
<div class="r" style="left:1071.5px;top:199px;width:17px;height:508px;background:#dadada;"></div>
<div class="r" style="left:1074px;top:180.4px;width:14px;height:13.5px;background:#fff;border:1px solid #a8a8a8;"></div>
<svg class="r" style="left:1077px;top:184px;" width="8" height="5" viewBox="0 0 8 5"><path d="M0.5 4.5 H7.5 L4 0.5 Z" fill="#555"/></svg>
<div class="r" style="left:1073.3px;top:296px;width:15px;height:178px;background:#fff;border:1px solid #9a9a9a;"></div>
<div class="r" style="left:1074px;top:693px;width:14px;height:13.5px;background:#fff;border:1px solid #a8a8a8;"></div>
<svg class="r" style="left:1077px;top:697.5px;" width="8" height="5" viewBox="0 0 8 5"><path d="M0.5 0.5 H7.5 L4 4.5 Z" fill="#555"/></svg>
<div class="r" style="left:1090px;top:178.5px;width:1.2px;height:551px;background:#d4d4d4;"></div>
<div class="r" style="left:0px;top:707.3px;width:1071px;height:22px;background:#e6e6e6;"></div>
<div class="r" style="left:0px;top:706.8px;width:143px;height:1.5px;background:#c4c4c4;"></div>
<svg class="r" style="left:19px;top:714px;" width="7" height="9" viewBox="0 0 7 9"><path d="M5.5 1 L1.5 4.5 L5.5 8" fill="#c0c0c0"/></svg>
<svg class="r" style="left:40px;top:714px;" width="7" height="9" viewBox="0 0 7 9"><path d="M1.5 1 L5.5 4.5 L1.5 8" fill="#c0c0c0"/></svg>
<div class="r" style="left:76px;top:711px;width:1px;height:16px;background:#b8b8b8;"></div>
<div class="t" style="left:86px;top:706.00px;font-size:12.3px;line-height:20px;color:#444;">Settings</div>
<div class="r" style="left:142px;top:708px;width:1px;height:21px;background:#c8c8c8;"></div>
<div class="r" style="left:142.5px;top:708px;width:152px;height:20px;background:#fff;"></div>
<div class="r" style="left:142.5px;top:725.6px;width:152px;height:2.1px;background:#217346;"></div>
<div class="r" style="left:294.5px;top:708px;width:1px;height:21px;background:#c8c8c8;"></div>
<div class="t" style="left:151px;top:706.00px;font-size:12.2px;line-height:20px;color:#217346;font-weight:700;">Caldwell Channel#Task</div>
<svg class="r" style="left:318px;top:710px;" width="16" height="16" viewBox="0 0 16 16"><circle cx="8" cy="8" r="7" fill="none" stroke="#666" stroke-width="1"/><path d="M8 4 V12 M4 8 H12" stroke="#666" stroke-width="1"/></svg>
<div class="r" style="left:652.5px;top:712.5px;width:1.8px;height:1.8px;background:#9a9a9a;border-radius:50%;"></div>
<div class="r" style="left:652.5px;top:716.7px;width:1.8px;height:1.8px;background:#9a9a9a;border-radius:50%;"></div>
<div class="r" style="left:652.5px;top:720.9000000000001px;width:1.8px;height:1.8px;background:#9a9a9a;border-radius:50%;"></div>
<div class="r" style="left:665.5px;top:711.5px;width:392px;height:13.5px;background:#d8d8d8;"></div>
<div class="r" style="left:665.4px;top:711.5px;width:185px;height:13.5px;background:#fff;border:1px solid #8a8a8a;"></div>
<div class="r" style="left:679.2px;top:711.5px;width:1px;height:13.5px;background:#8a8a8a;"></div>
<svg class="r" style="left:669px;top:714.5px;" width="7" height="8" viewBox="0 0 7 8"><path d="M5.5 0.5 V7.5 L1.5 4 Z" fill="#444"/></svg>
<div class="r" style="left:1057.5px;top:711.5px;width:14px;height:13.5px;background:#fff;border:1px solid #8a8a8a;"></div>
<svg class="r" style="left:1061.5px;top:714.5px;" width="7" height="8" viewBox="0 0 7 8"><path d="M1.5 0.5 V7.5 L5.5 4 Z" fill="#444"/></svg>
<div class="r" style="left:0px;top:729.3px;width:1412px;height:20px;background:#f3f2f1;"></div>
<div class="t" style="left:6.8px;top:730.00px;font-size:9.2px;line-height:20px;color:#444;">Ready</div>
<svg class="r" style="left:50px;top:731px;" width="16" height="16" viewBox="0 0 16 16"><circle cx="6.3" cy="2.8" r="1.7" fill="none" stroke="#555" stroke-width="1"/><path d="M1.5 3.5 Q2.5 6 6.3 5.8 Q10 6 11.2 3.5" fill="none" stroke="#555" stroke-width="1"/><path d="M6.3 6 V9.5 L4 13.8 M4.5 9.5 H8" fill="none" stroke="#555" stroke-width="1"/><path d="M8.2 11.5 L10.2 13.5 L14.2 9.2" fill="none" stroke="#555" stroke-width="1.1"/></svg>
<div class="t" style="left:66px;top:730.00px;font-size:9.8px;line-height:20px;color:#444;">Accessibility: Good to go</div>
<div class="r" style="left:1138.8px;top:730px;width:36.2px;height:17.5px;background:#d2d2d2;"></div>
<svg class="r" style="left:1150px;top:732px;" width="13" height="13" viewBox="0 0 13 13"><rect x="0.5" y="0.5" width="12" height="12" fill="none" stroke="#555" stroke-width="1"/><path d="M4.5 0.5 V12.5 M8.5 0.5 V12.5 M0.5 4.5 H12.5 M0.5 8.5 H12.5" stroke="#555" stroke-width="1"/></svg>
<svg class="r" style="left:1187px;top:732px;" width="13" height="13" viewBox="0 0 13 13"><rect x="0.5" y="0.5" width="12" height="12" fill="none" stroke="#555" stroke-width="1"/><rect x="3" y="2.5" width="7" height="8" fill="none" stroke="#555" stroke-width="0.9"/><path d="M4.5 5 H8.5 M4.5 7 H8.5" stroke="#777" stroke-width="0.7"/></svg>
<svg class="r" style="left:1224px;top:732px;" width="13" height="13" viewBox="0 0 13 13"><path d="M0.5 12.5 V0.5 H12.5 V12.5 M0.5 8.5 H12.5 M4.5 0.5 V8.5 M8.5 0.5 V5" fill="none" stroke="#555" stroke-width="1"/></svg>
<div class="r" style="left:1254.5px;top:738.5px;width:6px;height:1px;background:#666;"></div>
<div class="r" style="left:1266px;top:739px;width:91.5px;height:1px;background:#777;"></div>
<div class="r" style="left:1312px;top:733.5px;width:4px;height:11px;background:#444;border-radius:1px;"></div>
<svg class="r" style="left:1361px;top:735px;" width="9" height="9" viewBox="0 0 9 9"><path d="M4.5 0 V9 M0 4.5 H9" stroke="#666" stroke-width="1"/></svg>
<div class="t" style="left:1381.5px;top:729.50px;font-size:9.6px;line-height:20px;color:#555;">115%</div>
<div class="r" style="left:1091.2px;top:178.5px;width:320.8px;height:551px;background:#e6e6e6;"></div>
<div class="t" style="left:1101px;top:191.20px;font-size:19.9px;line-height:20px;color:#2a7a4c;transform:scaleX(0.925);transform-origin:0 50%;">eTask Web Services</div>
<svg class="r" style="left:1348px;top:195px;" width="11" height="6" viewBox="0 0 11 6"><path d="M0.5 0.5 H10.5 L5.5 5.5 Z" fill="#666"/></svg>
<svg class="r" style="left:1386px;top:193px;" width="11" height="11" viewBox="0 0 11 11"><path d="M1 1 L10 10 M10 1 L1 10" stroke="#555" stroke-width="1.3"/></svg>
<div class="r" style="left:1101.3px;top:220.4px;width:299.5px;height:496px;background:#f4f4f4;border:1px solid #d4d4d4;"></div>
<div class="r" style="left:1102px;top:259.6px;width:298px;height:1px;background:#dedede;"></div>
<svg class="r" style="left:1122px;top:232px;" width="12" height="17" viewBox="0 0 12 17"><path d="M10.5 1 L2 8.5 L10.5 16" fill="none" stroke="#444" stroke-width="1.3"/></svg>
<div class="t" style="left:1148px;top:230.80px;font-size:12.1px;line-height:20px;color:#1b1b1b;font-weight:700;">Caldwell Channel</div>
<div class="t" style="left:1124px;top:273.50px;font-size:11.1px;line-height:20px;color:#8a8886;">Work Item<span style="color:#a4262c">*</span></div>
<div class="r" style="left:1124px;top:294.4px;width:255px;height:29.30000000000001px;background:#fff;border-radius:3px;box-shadow:0 0.5px 3px rgba(0,0,0,0.13);"></div>
<div class="t" style="left:1135px;top:299.80px;font-size:12.3px;line-height:20px;color:#3b3a39;">Task</div>
<svg class="r" style="left:1365px;top:305px;" width="11" height="8" viewBox="0 0 11 8"><path d="M1 1.5 L5.5 6 L10 1.5" fill="none" stroke="#333" stroke-width="1.5"/></svg>
<div class="t" style="left:1124px;top:338.20px;font-size:11.1px;line-height:20px;color:#8a8886;">View<span style="color:#a4262c">*</span></div>
<div class="r" style="left:1124px;top:359px;width:255px;height:29px;background:#fff;border-radius:3px;box-shadow:0 0.5px 3px rgba(0,0,0,0.13);"></div>
<div class="t" style="left:1135px;top:364.30px;font-size:12.8px;line-height:20px;color:#3b3a39;">Default View</div>
<svg class="r" style="left:1365px;top:369.5px;" width="11" height="8" viewBox="0 0 11 8"><path d="M1 1.5 L5.5 6 L10 1.5" fill="none" stroke="#333" stroke-width="1.5"/></svg>
<div class="t" style="left:1124px;top:402.20px;font-size:11.1px;line-height:20px;color:#8a8886;">Max Row<span style="color:#a4262c">*</span></div>
<div class="r" style="left:1124px;top:423px;width:255px;height:29px;background:#fff;border-radius:3px;box-shadow:0 0.5px 3px rgba(0,0,0,0.13);"></div>
<div class="t" style="left:1135px;top:428.50px;font-size:12.8px;line-height:20px;color:#3b3a39;">30</div>
<div class="r" style="left:1313.8px;top:469.4px;width:65.2px;height:29px;background:#720b10;border-radius:3px;"></div>
<div class="t" style="left:1146.4px;width:400px;text-align:center;top:474.00px;font-size:12.8px;line-height:20px;color:#fff;font-weight:700;">Get</div>
<div class="r" style="left:1124px;top:511.3px;width:255px;height:29.69999999999999px;background:#fff;border-radius:3px;box-shadow:0 0.5px 3px rgba(0,0,0,0.13);"></div>
<svg class="r" style="left:1134px;top:518px;" width="17" height="16" viewBox="0 0 17 16"><rect x="0.7" y="0.7" width="5.8" height="5.8" rx="0.8" fill="none" stroke="#555" stroke-width="1.1"/><rect x="9" y="0.7" width="5.8" height="5.8" rx="0.8" fill="none" stroke="#555" stroke-width="1.1"/><rect x="0.7" y="8.7" width="5.8" height="5.8" rx="0.8" fill="none" stroke="#555" stroke-width="1.1"/><rect x="9" y="8.7" width="5.8" height="5.8" rx="0.8" fill="none" stroke="#555" stroke-width="1.1"/></svg>
<div class="t" style="left:1161px;top:517.30px;font-size:12.45px;line-height:20px;color:#3b3a39;">Format Table</div>
<div class="r" style="left:1124px;top:554px;width:255px;height:29px;background:#fff;border-radius:3px;box-shadow:0 0.5px 3px rgba(0,0,0,0.13);"></div>
<svg class="r" style="left:1134px;top:560px;" width="17" height="16" viewBox="0 0 17 16"><path d="M1 1 H15 V11 H6 L2.5 14.5 V11 H1 Z" fill="none" stroke="#444" stroke-width="1.1" stroke-linejoin="round"/><circle cx="5" cy="6" r="0.9" fill="#444"/><circle cx="8" cy="6" r="0.9" fill="#444"/><circle cx="11" cy="6" r="0.9" fill="#444"/></svg>
<div class="t" style="left:1161px;top:558.80px;font-size:12.1px;line-height:20px;color:#3b3a39;">Review Local Changes</div>
<div class="r" style="left:1124px;top:595.8px;width:255px;height:62px;background:#fff;border-radius:3px;box-shadow:0 0.5px 3px rgba(0,0,0,0.13);"></div>
<div class="r" style="left:1341.2px;top:596px;width:1px;height:29px;background:#e6e6e6;"></div>
<div class="r" style="left:1124px;top:624.7px;width:255px;height:1px;background:#d6d6d6;"></div>
<div class="t" style="left:1135px;top:601.00px;font-size:12.0px;line-height:20px;color:#605e5c;">Changes</div>
<svg class="r" style="left:1352px;top:602px;" width="17" height="17" viewBox="0 0 17 17"><path d="M1.96 9.42 A6.6 6.6 0 0 1 13.70 4.44" fill="none" stroke="#333" stroke-width="1.3"/><path d="M15.7 2.3 V7.2 H10.8 Z" fill="#333"/><path d="M15.04 7.58 A6.6 6.6 0 0 1 3.30 12.56" fill="none" stroke="#333" stroke-width="1.3"/><path d="M1.3 14.7 V9.8 H6.2 Z" fill="#333"/></svg>
<div class="r" style="left:1124px;top:632px;width:240px;height:25.8px;background:#f5f5f5;"></div>
<div class="r" style="left:1364px;top:626px;width:15px;height:32px;background:#f0f0f0;"></div>
<svg class="r" style="left:1367px;top:631px;" width="9" height="6" viewBox="0 0 9 6"><path d="M0.5 5 H8.5 L4.5 1 Z" fill="#bdbdbd"/></svg>
<div class="r" style="left:1365px;top:641px;width:13px;height:2.5px;background:#c8c8c8;"></div>
<svg class="r" style="left:1367px;top:648px;" width="9" height="6" viewBox="0 0 9 6"><path d="M0.5 1 H8.5 L4.5 5 Z" fill="#555"/></svg>
<div class="t" style="left:1135px;top:637.00px;font-size:12.6px;line-height:20px;color:#252423;">Delete - 328</div>
<svg class="r" style="left:1336.5px;top:638.5px;" width="17" height="17" viewBox="0 0 17 17"><path d="M1.96 9.42 A6.6 6.6 0 0 1 13.70 4.44" fill="none" stroke="#333" stroke-width="1.3"/><path d="M15.7 2.3 V7.2 H10.8 Z" fill="#333"/><path d="M15.04 7.58 A6.6 6.6 0 0 1 3.30 12.56" fill="none" stroke="#333" stroke-width="1.3"/><path d="M1.3 14.7 V9.8 H6.2 Z" fill="#333"/></svg>
<div class="t" style="left:1123.8px;top:689.40px;font-size:10.4px;line-height:20px;color:#a19f9d;">Version: 1.1.0.17</div>
<svg class="r" style="left:1280px;top:684px;" width="104" height="30" viewBox="0 0 104 30"><circle cx="14.70" cy="15.10" r="7.8" fill="none" stroke="#f6b300" stroke-width="2.6"/><path d="M5.60 11.20 Q11.20 12.00 14.70 21.20 Q18.20 12.00 23.80 11.20 L23.80 14.20 Q18.60 15.20 14.70 22.00 Q10.80 15.20 5.60 14.20 Z" fill="#6e0f13"/><circle cx="32.00" cy="15.10" r="4.1" fill="none" stroke="#373c40" stroke-width="2.4"/><path d="M35.60 9.80 V20.40" stroke="#373c40" stroke-width="2.4"/><circle cx="45.80" cy="15.10" r="4.1" fill="none" stroke="#373c40" stroke-width="2.4"/><path d="M41.00 9.80 V23.90" stroke="#373c40" stroke-width="2.4"/><circle cx="58.20" cy="15.10" r="4.1" fill="none" stroke="#373c40" stroke-width="2.4"/><path d="M53.40 9.80 V23.90" stroke="#373c40" stroke-width="2.4"/><path d="M65.80 9.80 L69.60 20.20 L73.40 9.80" fill="none" stroke="#c3c5c7" stroke-width="2.4" stroke-linejoin="round"/><path d="M77.70 9.80 V20.40" stroke="#c3c5c7" stroke-width="2.4"/><circle cx="77.70" cy="7.20" r="1.3" fill="#c3c5c7"/><path d="M84.30 6.30 V20.40 M80.90 10.90 H86.60" stroke="#c3c5c7" stroke-width="2.4"/><path d="M89.70 9.80 L93.60 19.60 M97.80 9.80 L91.60 23.90" fill="none" stroke="#c3c5c7" stroke-width="2.4"/></svg>
<div class="r" style="left:1080px;top:563.4px;width:42px;height:3px;background:#e8232e;border-radius:1.5px;"></div>
<div class="r" style="left:1080px;top:644px;width:43px;height:3px;background:#e8232e;border-radius:1.5px;"></div>
<div class="r" style="left:1377.5px;top:608.5px;width:84px;height:3px;background:#e8232e;border-radius:1.5px;"></div>
<div class="r" style="left:1358.5px;top:644px;width:103px;height:3px;background:#e8232e;border-radius:1.5px;"></div>
<div class="r" style="left:607.8px;top:470px;width:3px;height:76px;background:#e8232e;border-radius:1.5px;"></div>
<div class="r" style="left:1062.8px;top:548.1px;width:33.4px;height:33.4px;border-radius:50%;background:#e0190e;"></div>
<div class="t" style="left:879.5px;width:400px;text-align:center;top:547.80px;font-size:22px;line-height:34px;color:#fff;">4</div>
<div class="r" style="left:1062.8px;top:628.7px;width:33.4px;height:33.4px;border-radius:50%;background:#e0190e;"></div>
<div class="t" style="left:879.5px;width:400px;text-align:center;top:628.40px;font-size:22px;line-height:34px;color:#fff;">6</div>
<div class="r" style="left:592.2px;top:452.6px;width:33.4px;height:33.4px;border-radius:50%;background:#e0190e;"></div>
<div class="t" style="left:408.9px;width:400px;text-align:center;top:452.30px;font-size:22px;line-height:34px;color:#fff;">5</div>
<div class="r" style="left:1445.3px;top:592.0px;width:33.4px;height:33.4px;border-radius:50%;background:#e0190e;"></div>
<div class="t" style="left:1262px;width:400px;text-align:center;top:591.70px;font-size:21px;line-height:34px;color:#fff;">7a</div>
<div class="r" style="left:1445.3px;top:628.7px;width:33.4px;height:33.4px;border-radius:50%;background:#e0190e;"></div>
<div class="t" style="left:1262px;width:400px;text-align:center;top:628.40px;font-size:21px;line-height:34px;color:#fff;">7b</div>
</body></html>
